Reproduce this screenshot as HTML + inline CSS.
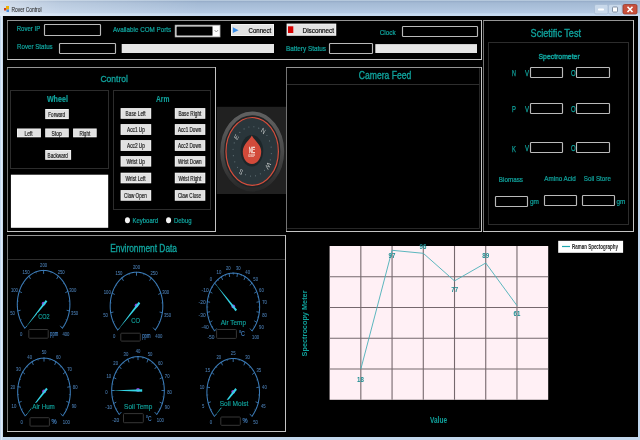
<!DOCTYPE html><html><head><meta charset="utf-8"><style>html,body{margin:0;padding:0;background:#000;overflow:hidden}svg{display:block;filter:blur(0.01px)}text{font-family:"Liberation Sans",sans-serif}</style></head><body>
<svg width="640" height="440" viewBox="0 0 640 440">
<defs><linearGradient id="tb" x1="0" y1="0" x2="0" y2="1"><stop offset="0" stop-color="#c4d6e6"/><stop offset="0.09" stop-color="#98aeca"/><stop offset="0.18" stop-color="#a3b9d4"/><stop offset="0.8" stop-color="#b4c9e2"/><stop offset="0.87" stop-color="#c6daf0"/><stop offset="1" stop-color="#c6daf0"/></linearGradient><linearGradient id="th" x1="0" y1="0" x2="1" y2="0"><stop offset="0" stop-color="#ffffff" stop-opacity="0.5"/><stop offset="0.3" stop-color="#ffffff" stop-opacity="0.25"/><stop offset="1" stop-color="#ffffff" stop-opacity="0"/></linearGradient></defs>
<rect x="0.00" y="0.00" width="640.00" height="440.00" fill="#c2d7ee" stroke="none" stroke-width="1" rx="0" />
<rect x="0.00" y="0.00" width="640.00" height="16.00" fill="url(#tb)" stroke="none" stroke-width="1" rx="0" />
<rect x="0.00" y="0.00" width="200.00" height="16.00" fill="url(#th)" stroke="none" stroke-width="1" rx="0" />
<rect x="1.00" y="16.00" width="1.20" height="424.00" fill="#dfeaf6" stroke="none" stroke-width="1" rx="0" />
<rect x="3.00" y="16.00" width="635.00" height="421.00" fill="#000" stroke="none" stroke-width="1" rx="0" />
<g transform="translate(4,6)"><rect x="0" y="2" width="2.5" height="2.5" fill="#d04020"/><rect x="2" y="0" width="3" height="3.5" fill="#f0b000"/><rect x="2.5" y="3.5" width="2.5" height="2.5" fill="#4a90e0"/></g>
<text x="11.50" y="12.00" font-size="6.98" fill="#2a2a2a" stroke="#2a2a2a" stroke-width="0.08" font-weight="normal" textLength="30.00" lengthAdjust="spacingAndGlyphs" >Rover Control</text>
<rect x="594.50" y="4.50" width="13.50" height="9.50" fill="#c8d8ea" stroke="#a8bcd4" stroke-width="0.8" rx="1.5" />
<rect x="598.00" y="8.50" width="6.00" height="2.00" fill="#fff" stroke="none" stroke-width="1" rx="0.8" />
<rect x="608.50" y="4.50" width="13.50" height="9.50" fill="#c8d8ea" stroke="#a8bcd4" stroke-width="0.8" rx="1.5" />
<rect x="612.50" y="7.00" width="5.00" height="5.00" fill="#fff" stroke="#6a7a90" stroke-width="0.8" rx="0.8" />
<rect x="623.00" y="4.50" width="14.00" height="9.50" fill="#c8503c" stroke="#9a3a2a" stroke-width="0.8" rx="1.5" />
<path d="M627.5,6.8 L632.5,12 M632.5,6.8 L627.5,12" stroke="#fff" stroke-width="1.6"/>
<line x1="7.50" y1="20.00" x2="7.50" y2="60.00" stroke="#747474" stroke-width="1" />
<line x1="7.00" y1="20.50" x2="482.00" y2="20.50" stroke="#959595" stroke-width="1" />
<line x1="7.00" y1="59.50" x2="482.00" y2="59.50" stroke="#c4c4c4" stroke-width="1" />
<line x1="481.50" y1="20.00" x2="481.50" y2="60.00" stroke="#c4c4c4" stroke-width="1" />
<text x="16.70" y="31.20" font-size="6.84" fill="#10a29c" stroke="#10a29c" stroke-width="0.22" font-weight="normal" textLength="23.50" lengthAdjust="spacingAndGlyphs" >Rover IP</text>
<rect x="44.50" y="24.50" width="56.00" height="11.00" fill="#000" stroke="#bababa" stroke-width="1.15" rx="0.8" />
<text x="17.00" y="49.00" font-size="6.56" fill="#10a29c" stroke="#10a29c" stroke-width="0.21" font-weight="normal" textLength="35.70" lengthAdjust="spacingAndGlyphs" >Rover Status</text>
<rect x="59.50" y="43.50" width="56.00" height="10.00" fill="#000" stroke="#bababa" stroke-width="1.15" rx="0.8" />
<text x="113.00" y="32.20" font-size="6.98" fill="#10a29c" stroke="#10a29c" stroke-width="0.22" font-weight="normal" textLength="58.25" lengthAdjust="spacingAndGlyphs" >Available COM Ports</text>
<rect x="175.20" y="25.20" width="44.80" height="11.70" fill="#fff" stroke="#b8b8b8" stroke-width="0.8" rx="0" />
<rect x="176.50" y="26.50" width="36.00" height="9.10" fill="#000" stroke="none" stroke-width="1" rx="0" />
<path d="M214.5,30 L216.3,32 L218.1,30" stroke="#777" stroke-width="0.7" fill="none"/>
<rect x="121.70" y="44.00" width="152.30" height="9.00" fill="#e6e6e6" stroke="none" stroke-width="1" rx="0" />
<rect x="231.00" y="24.00" width="43.00" height="12.00" fill="#f4f4f4" stroke="none" stroke-width="1" rx="0" />
<rect x="232.00" y="25.00" width="41.00" height="10.00" fill="#e2e2e2" stroke="none" stroke-width="1" rx="0" />
<path d="M232.8,27.3 L238.6,30.2 L232.8,33 Z" fill="#3a8ee8"/>
<text x="248.60" y="32.60" font-size="6.42" fill="#101010" stroke="#101010" stroke-width="0.21" font-weight="normal" textLength="22.65" lengthAdjust="spacingAndGlyphs" >Connect</text>
<rect x="286.60" y="23.60" width="49.65" height="12.20" fill="#f4f4f4" stroke="none" stroke-width="1" rx="0" />
<rect x="287.60" y="24.60" width="47.65" height="10.20" fill="#e2e2e2" stroke="none" stroke-width="1" rx="0" />
<rect x="288.00" y="26.30" width="5.30" height="6.70" fill="#d80000" stroke="none" stroke-width="1" rx="0" />
<text x="302.60" y="32.60" font-size="6.98" fill="#101010" stroke="#101010" stroke-width="0.22" font-weight="normal" textLength="31.40" lengthAdjust="spacingAndGlyphs" >Disconnect</text>
<text x="286.00" y="51.20" font-size="6.84" fill="#10a29c" stroke="#10a29c" stroke-width="0.22" font-weight="normal" textLength="40.00" lengthAdjust="spacingAndGlyphs" >Battery Status</text>
<rect x="329.50" y="43.50" width="43.00" height="10.00" fill="#000" stroke="#bababa" stroke-width="1.15" rx="0.8" />
<rect x="375.30" y="44.10" width="101.70" height="8.90" fill="#e6e6e6" stroke="none" stroke-width="1" rx="0" />
<text x="379.75" y="34.70" font-size="7.12" fill="#10a29c" stroke="#10a29c" stroke-width="0.23" font-weight="normal" textLength="15.95" lengthAdjust="spacingAndGlyphs" >Clock</text>
<rect x="402.50" y="26.50" width="75.00" height="10.00" fill="#000" stroke="#bababa" stroke-width="1.15" rx="0.8" />
<line x1="483.50" y1="20.00" x2="483.50" y2="232.00" stroke="#747474" stroke-width="1" />
<line x1="483.00" y1="20.50" x2="634.00" y2="20.50" stroke="#959595" stroke-width="1" />
<line x1="483.00" y1="231.50" x2="634.00" y2="231.50" stroke="#c4c4c4" stroke-width="1" />
<line x1="633.50" y1="20.00" x2="633.50" y2="232.00" stroke="#c4c4c4" stroke-width="1" />
<text x="530.60" y="36.50" font-size="10.47" fill="#10a29c" stroke="#10a29c" stroke-width="0.34" font-weight="normal" textLength="50.40" lengthAdjust="spacingAndGlyphs" >Scietific Test</text>
<rect x="488.50" y="42.50" width="140.00" height="182.00" fill="none" stroke="#2c2c2c" stroke-width="1" rx="0" />
<text x="538.50" y="59.30" font-size="7.68" fill="#10a29c" stroke="#10a29c" stroke-width="0.42" font-weight="normal" textLength="41.20" lengthAdjust="spacingAndGlyphs" >Spectrometer</text>
<text x="512.10" y="75.90" font-size="8.38" fill="#10a29c" stroke="#10a29c" stroke-width="0.25" font-weight="normal" textLength="3.90" lengthAdjust="spacingAndGlyphs" >N</text>
<text x="525.00" y="75.90" font-size="8.38" fill="#10a29c" stroke="#10a29c" stroke-width="0.25" font-weight="normal" textLength="4.05" lengthAdjust="spacingAndGlyphs" >V</text>
<rect x="530.50" y="67.50" width="32.00" height="10.00" fill="#000" stroke="#bababa" stroke-width="1.15" rx="0.8" />
<text x="570.90" y="75.90" font-size="8.38" fill="#10a29c" stroke="#10a29c" stroke-width="0.25" font-weight="normal" textLength="4.70" lengthAdjust="spacingAndGlyphs" >O</text>
<rect x="576.50" y="67.50" width="33.00" height="10.00" fill="#000" stroke="#bababa" stroke-width="1.15" rx="0.8" />
<text x="512.10" y="111.90" font-size="8.38" fill="#10a29c" stroke="#10a29c" stroke-width="0.25" font-weight="normal" textLength="3.90" lengthAdjust="spacingAndGlyphs" >P</text>
<text x="525.00" y="112.00" font-size="8.38" fill="#10a29c" stroke="#10a29c" stroke-width="0.25" font-weight="normal" textLength="4.05" lengthAdjust="spacingAndGlyphs" >V</text>
<rect x="530.50" y="103.50" width="32.00" height="10.00" fill="#000" stroke="#bababa" stroke-width="1.15" rx="0.8" />
<text x="570.90" y="112.00" font-size="8.38" fill="#10a29c" stroke="#10a29c" stroke-width="0.25" font-weight="normal" textLength="4.70" lengthAdjust="spacingAndGlyphs" >O</text>
<rect x="576.50" y="103.50" width="33.00" height="10.00" fill="#000" stroke="#bababa" stroke-width="1.15" rx="0.8" />
<text x="512.10" y="152.00" font-size="8.38" fill="#10a29c" stroke="#10a29c" stroke-width="0.25" font-weight="normal" textLength="3.90" lengthAdjust="spacingAndGlyphs" >K</text>
<text x="525.00" y="151.00" font-size="8.38" fill="#10a29c" stroke="#10a29c" stroke-width="0.25" font-weight="normal" textLength="4.05" lengthAdjust="spacingAndGlyphs" >V</text>
<rect x="530.50" y="142.50" width="32.00" height="10.00" fill="#000" stroke="#bababa" stroke-width="1.15" rx="0.8" />
<text x="570.90" y="151.00" font-size="8.38" fill="#10a29c" stroke="#10a29c" stroke-width="0.25" font-weight="normal" textLength="4.70" lengthAdjust="spacingAndGlyphs" >O</text>
<rect x="576.50" y="142.50" width="33.00" height="10.00" fill="#000" stroke="#bababa" stroke-width="1.15" rx="0.8" />
<text x="498.80" y="182.40" font-size="7.40" fill="#10a29c" stroke="#10a29c" stroke-width="0.24" font-weight="normal" textLength="24.20" lengthAdjust="spacingAndGlyphs" >Biomass</text>
<text x="544.30" y="181.00" font-size="7.12" fill="#10a29c" stroke="#10a29c" stroke-width="0.23" font-weight="normal" textLength="31.50" lengthAdjust="spacingAndGlyphs" >Amino Acid</text>
<text x="583.80" y="181.00" font-size="6.98" fill="#10a29c" stroke="#10a29c" stroke-width="0.22" font-weight="normal" textLength="27.10" lengthAdjust="spacingAndGlyphs" >Soil Store</text>
<rect x="495.50" y="196.50" width="32.00" height="10.00" fill="#000" stroke="#bababa" stroke-width="1.15" rx="0.8" />
<rect x="544.50" y="195.50" width="32.00" height="10.00" fill="#000" stroke="#bababa" stroke-width="1.15" rx="0.8" />
<rect x="582.50" y="195.50" width="32.00" height="10.00" fill="#000" stroke="#bababa" stroke-width="1.15" rx="0.8" />
<text x="530.00" y="204.20" font-size="6.55" fill="#10a29c" stroke="#10a29c" stroke-width="0.21" font-weight="normal" textLength="9.00" lengthAdjust="spacingAndGlyphs" >gm</text>
<text x="616.50" y="203.70" font-size="6.74" fill="#10a29c" stroke="#10a29c" stroke-width="0.22" font-weight="normal" textLength="8.80" lengthAdjust="spacingAndGlyphs" >gm</text>
<line x1="7.50" y1="67.00" x2="7.50" y2="232.00" stroke="#747474" stroke-width="1" />
<line x1="7.00" y1="67.50" x2="216.00" y2="67.50" stroke="#959595" stroke-width="1" />
<line x1="7.00" y1="231.50" x2="216.00" y2="231.50" stroke="#c4c4c4" stroke-width="1" />
<line x1="215.50" y1="67.00" x2="215.50" y2="232.00" stroke="#c4c4c4" stroke-width="1" />
<text x="100.40" y="82.10" font-size="9.92" fill="#10a29c" stroke="#10a29c" stroke-width="0.32" font-weight="normal" textLength="27.50" lengthAdjust="spacingAndGlyphs" >Control</text>
<rect x="10.50" y="90.50" width="98.00" height="78.00" fill="none" stroke="#2c2c2c" stroke-width="1" rx="0" />
<text x="46.90" y="101.60" font-size="8.80" fill="#10a29c" stroke="#10a29c" stroke-width="0.20" font-weight="bold" textLength="21.00" lengthAdjust="spacingAndGlyphs" >Wheel</text>
<rect x="45.20" y="109.00" width="23.60" height="10.10" fill="#f4f4f4" stroke="none" stroke-width="1" rx="0" />
<rect x="46.00" y="109.80" width="22.00" height="8.50" fill="#e1e1e1" stroke="none" stroke-width="1" rx="0" />
<text x="48.30" y="116.90" font-size="6.28" fill="#1c1c1c" stroke="#1c1c1c" stroke-width="0.18" textLength="16.80" lengthAdjust="spacingAndGlyphs">Forward</text>
<rect x="17.00" y="128.50" width="23.90" height="8.80" fill="#f4f4f4" stroke="none" stroke-width="1" rx="0" />
<rect x="17.80" y="129.30" width="22.30" height="7.20" fill="#e1e1e1" stroke="none" stroke-width="1" rx="0" />
<text x="24.50" y="135.75" font-size="6.28" fill="#1c1c1c" stroke="#1c1c1c" stroke-width="0.18" textLength="8.00" lengthAdjust="spacingAndGlyphs">Left</text>
<rect x="45.20" y="128.50" width="23.60" height="8.80" fill="#f4f4f4" stroke="none" stroke-width="1" rx="0" />
<rect x="46.00" y="129.30" width="22.00" height="7.20" fill="#e1e1e1" stroke="none" stroke-width="1" rx="0" />
<text x="51.60" y="135.75" font-size="6.28" fill="#1c1c1c" stroke="#1c1c1c" stroke-width="0.18" textLength="10.10" lengthAdjust="spacingAndGlyphs">Stop</text>
<rect x="73.10" y="128.50" width="23.60" height="8.80" fill="#f4f4f4" stroke="none" stroke-width="1" rx="0" />
<rect x="73.90" y="129.30" width="22.00" height="7.20" fill="#e1e1e1" stroke="none" stroke-width="1" rx="0" />
<text x="79.50" y="135.75" font-size="6.28" fill="#1c1c1c" stroke="#1c1c1c" stroke-width="0.18" textLength="10.80" lengthAdjust="spacingAndGlyphs">Right</text>
<rect x="45.20" y="150.00" width="25.90" height="9.80" fill="#f4f4f4" stroke="none" stroke-width="1" rx="0" />
<rect x="46.00" y="150.80" width="24.30" height="8.20" fill="#e1e1e1" stroke="none" stroke-width="1" rx="0" />
<text x="47.60" y="157.75" font-size="6.28" fill="#1c1c1c" stroke="#1c1c1c" stroke-width="0.18" textLength="20.20" lengthAdjust="spacingAndGlyphs">Backward</text>
<rect x="10.90" y="174.70" width="97.30" height="53.10" fill="#fff" stroke="none" stroke-width="1" rx="0" />
<rect x="113.50" y="90.50" width="97.00" height="119.00" fill="none" stroke="#2c2c2c" stroke-width="1" rx="0" />
<text x="156.00" y="102.20" font-size="8.66" fill="#10a29c" stroke="#10a29c" stroke-width="0.10" font-weight="bold" textLength="13.40" lengthAdjust="spacingAndGlyphs" >Arm</text>
<rect x="120.60" y="108.10" width="30.60" height="10.70" fill="#f4f4f4" stroke="none" stroke-width="1" rx="0" />
<rect x="121.40" y="108.90" width="29.00" height="9.10" fill="#e1e1e1" stroke="none" stroke-width="1" rx="0" />
<text x="125.60" y="116.30" font-size="6.28" fill="#1c1c1c" stroke="#1c1c1c" stroke-width="0.18" textLength="20.10" lengthAdjust="spacingAndGlyphs">Base Left</text>
<rect x="174.80" y="108.10" width="30.50" height="10.70" fill="#f4f4f4" stroke="none" stroke-width="1" rx="0" />
<rect x="175.60" y="108.90" width="28.90" height="9.10" fill="#e1e1e1" stroke="none" stroke-width="1" rx="0" />
<text x="178.40" y="116.30" font-size="6.28" fill="#1c1c1c" stroke="#1c1c1c" stroke-width="0.18" textLength="22.90" lengthAdjust="spacingAndGlyphs">Base Right</text>
<rect x="120.60" y="124.10" width="30.60" height="10.80" fill="#f4f4f4" stroke="none" stroke-width="1" rx="0" />
<rect x="121.40" y="124.90" width="29.00" height="9.20" fill="#e1e1e1" stroke="none" stroke-width="1" rx="0" />
<text x="127.00" y="132.35" font-size="6.28" fill="#1c1c1c" stroke="#1c1c1c" stroke-width="0.18" textLength="17.90" lengthAdjust="spacingAndGlyphs">Acc1 Up</text>
<rect x="174.80" y="124.10" width="30.50" height="10.80" fill="#f4f4f4" stroke="none" stroke-width="1" rx="0" />
<rect x="175.60" y="124.90" width="28.90" height="9.20" fill="#e1e1e1" stroke="none" stroke-width="1" rx="0" />
<text x="178.00" y="132.35" font-size="6.28" fill="#1c1c1c" stroke="#1c1c1c" stroke-width="0.18" textLength="23.30" lengthAdjust="spacingAndGlyphs">Acc1 Down</text>
<rect x="120.60" y="140.10" width="30.60" height="10.80" fill="#f4f4f4" stroke="none" stroke-width="1" rx="0" />
<rect x="121.40" y="140.90" width="29.00" height="9.20" fill="#e1e1e1" stroke="none" stroke-width="1" rx="0" />
<text x="127.00" y="148.35" font-size="6.28" fill="#1c1c1c" stroke="#1c1c1c" stroke-width="0.18" textLength="17.90" lengthAdjust="spacingAndGlyphs">Acc2 Up</text>
<rect x="174.80" y="140.10" width="30.50" height="10.80" fill="#f4f4f4" stroke="none" stroke-width="1" rx="0" />
<rect x="175.60" y="140.90" width="28.90" height="9.20" fill="#e1e1e1" stroke="none" stroke-width="1" rx="0" />
<text x="178.00" y="148.35" font-size="6.28" fill="#1c1c1c" stroke="#1c1c1c" stroke-width="0.18" textLength="23.30" lengthAdjust="spacingAndGlyphs">Acc2 Down</text>
<rect x="120.60" y="156.10" width="30.60" height="10.50" fill="#f4f4f4" stroke="none" stroke-width="1" rx="0" />
<rect x="121.40" y="156.90" width="29.00" height="8.90" fill="#e1e1e1" stroke="none" stroke-width="1" rx="0" />
<text x="126.40" y="164.20" font-size="6.28" fill="#1c1c1c" stroke="#1c1c1c" stroke-width="0.18" textLength="18.50" lengthAdjust="spacingAndGlyphs">Wrist Up</text>
<rect x="174.80" y="156.10" width="30.50" height="10.50" fill="#f4f4f4" stroke="none" stroke-width="1" rx="0" />
<rect x="175.60" y="156.90" width="28.90" height="8.90" fill="#e1e1e1" stroke="none" stroke-width="1" rx="0" />
<text x="178.00" y="164.20" font-size="6.28" fill="#1c1c1c" stroke="#1c1c1c" stroke-width="0.18" textLength="23.70" lengthAdjust="spacingAndGlyphs">Wrist Down</text>
<rect x="120.60" y="172.70" width="30.60" height="10.60" fill="#f4f4f4" stroke="none" stroke-width="1" rx="0" />
<rect x="121.40" y="173.50" width="29.00" height="9.00" fill="#e1e1e1" stroke="none" stroke-width="1" rx="0" />
<text x="125.60" y="180.85" font-size="6.28" fill="#1c1c1c" stroke="#1c1c1c" stroke-width="0.18" textLength="20.10" lengthAdjust="spacingAndGlyphs">Wrist Left</text>
<rect x="174.80" y="172.70" width="30.50" height="10.60" fill="#f4f4f4" stroke="none" stroke-width="1" rx="0" />
<rect x="175.60" y="173.50" width="28.90" height="9.00" fill="#e1e1e1" stroke="none" stroke-width="1" rx="0" />
<text x="178.40" y="180.85" font-size="6.28" fill="#1c1c1c" stroke="#1c1c1c" stroke-width="0.18" textLength="22.90" lengthAdjust="spacingAndGlyphs">Wrist Right</text>
<rect x="120.60" y="190.10" width="30.60" height="10.65" fill="#f4f4f4" stroke="none" stroke-width="1" rx="0" />
<rect x="121.40" y="190.90" width="29.00" height="9.05" fill="#e1e1e1" stroke="none" stroke-width="1" rx="0" />
<text x="124.10" y="198.28" font-size="6.28" fill="#1c1c1c" stroke="#1c1c1c" stroke-width="0.18" textLength="22.70" lengthAdjust="spacingAndGlyphs">Claw Open</text>
<rect x="174.80" y="190.10" width="30.50" height="10.65" fill="#f4f4f4" stroke="none" stroke-width="1" rx="0" />
<rect x="175.60" y="190.90" width="28.90" height="9.05" fill="#e1e1e1" stroke="none" stroke-width="1" rx="0" />
<text x="178.00" y="198.28" font-size="6.28" fill="#1c1c1c" stroke="#1c1c1c" stroke-width="0.18" textLength="23.00" lengthAdjust="spacingAndGlyphs">Claw Close</text>
<ellipse cx="127.45" cy="220.25" rx="2.5" ry="3.05" fill="#f4f4f4"/>
<text x="132.60" y="222.60" font-size="7.12" fill="#10a29c" stroke="#10a29c" stroke-width="0.23" font-weight="normal" textLength="25.40" lengthAdjust="spacingAndGlyphs" >Keyboard</text>
<ellipse cx="168.55" cy="220.25" rx="2.5" ry="3.05" fill="#f4f4f4"/>
<text x="174.00" y="222.60" font-size="7.12" fill="#10a29c" stroke="#10a29c" stroke-width="0.23" font-weight="normal" textLength="17.50" lengthAdjust="spacingAndGlyphs" >Debug</text>
<rect x="216.80" y="106.80" width="69.20" height="87.20" fill="#212121" stroke="none" stroke-width="1" rx="0" />
<defs><linearGradient id="cg" x1="0" y1="0" x2="0" y2="1"><stop offset="0" stop-color="#606060"/><stop offset="0.5" stop-color="#4a4a4a"/><stop offset="1" stop-color="#282828"/></linearGradient></defs>
<ellipse cx="252.2" cy="151.4" rx="31.9" ry="40.2" fill="#1f2426"/>
<ellipse cx="252.2" cy="151.4" rx="30.1" ry="38.1" fill="none" stroke="url(#cg)" stroke-width="3.8"/>
<ellipse cx="252.2" cy="151.4" rx="26.2" ry="33.9" fill="#2a363b" stroke="#d64e3c" stroke-width="1.2"/>
<ellipse cx="266.91" cy="135.48" rx="0.5" ry="0.6" fill="#6a7a80"/>
<ellipse cx="269.60" cy="140.93" rx="0.5" ry="0.6" fill="#6a7a80"/>
<ellipse cx="271.11" cy="147.10" rx="0.5" ry="0.6" fill="#6a7a80"/>
<ellipse cx="271.33" cy="153.56" rx="0.5" ry="0.6" fill="#6a7a80"/>
<ellipse cx="270.24" cy="159.87" rx="0.5" ry="0.6" fill="#6a7a80"/>
<ellipse cx="264.54" cy="170.37" rx="0.5" ry="0.6" fill="#6a7a80"/>
<ellipse cx="260.31" cy="173.85" rx="0.5" ry="0.6" fill="#6a7a80"/>
<ellipse cx="255.53" cy="175.79" rx="0.5" ry="0.6" fill="#6a7a80"/>
<ellipse cx="250.53" cy="176.07" rx="0.5" ry="0.6" fill="#6a7a80"/>
<ellipse cx="245.63" cy="174.67" rx="0.5" ry="0.6" fill="#6a7a80"/>
<ellipse cx="237.49" cy="167.32" rx="0.5" ry="0.6" fill="#6a7a80"/>
<ellipse cx="234.80" cy="161.87" rx="0.5" ry="0.6" fill="#6a7a80"/>
<ellipse cx="233.29" cy="155.70" rx="0.5" ry="0.6" fill="#6a7a80"/>
<ellipse cx="233.07" cy="149.24" rx="0.5" ry="0.6" fill="#6a7a80"/>
<ellipse cx="234.16" cy="142.93" rx="0.5" ry="0.6" fill="#6a7a80"/>
<ellipse cx="239.86" cy="132.43" rx="0.5" ry="0.6" fill="#6a7a80"/>
<ellipse cx="244.09" cy="128.95" rx="0.5" ry="0.6" fill="#6a7a80"/>
<ellipse cx="248.87" cy="127.01" rx="0.5" ry="0.6" fill="#6a7a80"/>
<ellipse cx="253.87" cy="126.73" rx="0.5" ry="0.6" fill="#6a7a80"/>
<ellipse cx="258.77" cy="128.13" rx="0.5" ry="0.6" fill="#6a7a80"/>
<ellipse cx="251.9" cy="150.8" rx="11.3" ry="15.8" fill="#1d2629"/>
<path d="M251.8,135.5 C254,140 261.2,144.5 261.2,151.5 C261.2,158.8 257,164 251.9,164 C246.8,164 242.8,158.8 242.8,151.5 C242.8,144.5 249.6,140 251.8,135.5 Z" fill="#d24a3a"/>
<g transform="translate(263.33,130.90) scale(1,1.29) rotate(35)"><text x="0" y="2.0" font-size="5.6" fill="#c0c4c4" text-anchor="middle">N</text></g>
<g transform="translate(236.31,137.05) scale(1,1.29) rotate(-55)"><text x="0" y="2.0" font-size="5.6" fill="#c0c4c4" text-anchor="middle">E</text></g>
<g transform="translate(241.07,171.90) scale(1,1.29) rotate(215)"><text x="0" y="2.0" font-size="5.6" fill="#c0c4c4" text-anchor="middle">S</text></g>
<g transform="translate(268.09,165.75) scale(1,1.29) rotate(125)"><text x="0" y="2.0" font-size="5.6" fill="#c0c4c4" text-anchor="middle">W</text></g>
<text x="248.7" y="153" font-size="8.3" fill="#f6e0d8" stroke="#f6e0d8" stroke-width="0.35" textLength="6.4" lengthAdjust="spacingAndGlyphs">NE</text>
<text x="248.6" y="157.3" font-size="3.8" fill="#f2d0c6" stroke="#f2d0c6" stroke-width="0.15" textLength="6.4" lengthAdjust="spacingAndGlyphs">030°</text>
<line x1="286.50" y1="67.00" x2="286.50" y2="232.00" stroke="#747474" stroke-width="1" />
<line x1="286.00" y1="67.50" x2="482.00" y2="67.50" stroke="#959595" stroke-width="1" />
<line x1="286.00" y1="231.50" x2="482.00" y2="231.50" stroke="#c4c4c4" stroke-width="1" />
<line x1="481.50" y1="67.00" x2="481.50" y2="232.00" stroke="#c4c4c4" stroke-width="1" />
<path d="M287.00,228.50 L479.50,228.50 L479.50,68.00" fill="none" stroke="#262626" stroke-width="1"/>
<line x1="287.00" y1="84.50" x2="479.50" y2="84.50" stroke="#2e2e2e" stroke-width="1" />
<text x="358.75" y="79.00" font-size="10.47" fill="#10a29c" stroke="#10a29c" stroke-width="0.34" font-weight="normal" textLength="52.50" lengthAdjust="spacingAndGlyphs" >Camera Feed</text>
<line x1="7.50" y1="235.00" x2="7.50" y2="432.00" stroke="#747474" stroke-width="1" />
<line x1="7.00" y1="235.50" x2="286.00" y2="235.50" stroke="#959595" stroke-width="1" />
<line x1="7.00" y1="431.50" x2="286.00" y2="431.50" stroke="#c4c4c4" stroke-width="1" />
<line x1="285.50" y1="235.00" x2="285.50" y2="432.00" stroke="#c4c4c4" stroke-width="1" />
<line x1="8.00" y1="259.50" x2="285.00" y2="259.50" stroke="#2e2e2e" stroke-width="1" />
<text x="110.20" y="251.90" font-size="10.47" fill="#10a29c" stroke="#10a29c" stroke-width="0.34" font-weight="normal" textLength="66.80" lengthAdjust="spacingAndGlyphs" >Environment Data</text>
<path d="M25.00,328.27 L24.68,327.85 L24.37,327.42 L24.06,326.98 L23.75,326.54 L23.45,326.09 L23.16,325.63 L22.88,325.17 L22.60,324.70 L22.32,324.23 L22.06,323.74 L21.80,323.26 L21.54,322.76 L21.30,322.26 L21.06,321.76 L20.82,321.25 L20.60,320.74 L20.38,320.22 L20.17,319.69 L19.96,319.16 L19.76,318.63 L19.57,318.09 L19.39,317.55 L19.22,317.00 L19.05,316.45 L18.89,315.89 L18.73,315.34 L18.59,314.78 L18.45,314.21 L18.32,313.64 L18.20,313.07 L18.08,312.50 L17.97,311.93 L17.87,311.35 L17.78,310.77 L17.70,310.19 L17.62,309.60 L17.56,309.02 L17.50,308.43 L17.44,307.84 L17.40,307.25 L17.36,306.66 L17.34,306.07 L17.32,305.48 L17.30,304.89 L17.30,304.30 L17.30,303.71 L17.32,303.12 L17.34,302.53 L17.36,301.94 L17.40,301.35 L17.44,300.76 L17.50,300.17 L17.56,299.58 L17.62,299.00 L17.70,298.41 L17.78,297.83 L17.87,297.25 L17.97,296.67 L18.08,296.10 L18.20,295.53 L18.32,294.96 L18.45,294.39 L18.59,293.82 L18.73,293.26 L18.89,292.71 L19.05,292.15 L19.22,291.60 L19.39,291.05 L19.57,290.51 L19.76,289.97 L19.96,289.44 L20.17,288.91 L20.38,288.38 L20.60,287.86 L20.82,287.35 L21.06,286.84 L21.30,286.34 L21.54,285.84 L21.80,285.34 L22.06,284.86 L22.32,284.37 L22.60,283.90 L22.88,283.43 L23.16,282.97 L23.45,282.51 L23.75,282.06 L24.06,281.62 L24.37,281.18 L24.68,280.75 L25.00,280.33 L25.33,279.91 L25.66,279.51 L26.00,279.11 L26.35,278.72 L26.69,278.33 L27.05,277.95 L27.41,277.59 L27.77,277.23 L28.14,276.87 L28.51,276.53 L28.89,276.20 L29.28,275.87 L29.66,275.55 L30.05,275.24 L30.45,274.94 L30.85,274.65 L31.25,274.37 L31.66,274.09 L32.07,273.83 L32.49,273.58 L32.90,273.33 L33.32,273.09 L33.75,272.87 L34.17,272.65 L34.60,272.44 L35.04,272.25 L35.47,272.06 L35.91,271.88 L36.35,271.71 L36.79,271.56 L37.24,271.41 L37.68,271.27 L38.13,271.14 L38.58,271.02 L39.03,270.92 L39.49,270.82 L39.94,270.73 L40.39,270.65 L40.85,270.59 L41.31,270.53 L41.77,270.48 L42.22,270.45 L42.68,270.42 L43.14,270.41 L43.60,270.40 L44.06,270.41 L44.52,270.42 L44.98,270.45 L45.43,270.48 L45.89,270.53 L46.35,270.59 L46.81,270.65 L47.26,270.73 L47.71,270.82 L48.17,270.92 L48.62,271.02 L49.07,271.14 L49.52,271.27 L49.96,271.41 L50.41,271.56 L50.85,271.71 L51.29,271.88 L51.73,272.06 L52.16,272.25 L52.60,272.44 L53.03,272.65 L53.45,272.87 L53.88,273.09 L54.30,273.33 L54.71,273.58 L55.13,273.83 L55.54,274.09 L55.95,274.37 L56.35,274.65 L56.75,274.94 L57.15,275.24 L57.54,275.55 L57.92,275.87 L58.31,276.20 L58.69,276.53 L59.06,276.87 L59.43,277.23 L59.79,277.59 L60.15,277.95 L60.51,278.33 L60.85,278.72 L61.20,279.11 L61.54,279.51 L61.87,279.91 L62.20,280.33 L62.52,280.75 L62.83,281.18 L63.14,281.62 L63.45,282.06 L63.75,282.51 L64.04,282.97 L64.32,283.43 L64.60,283.90 L64.88,284.37 L65.14,284.86 L65.40,285.34 L65.66,285.84 L65.90,286.34 L66.14,286.84 L66.38,287.35 L66.60,287.86 L66.82,288.38 L67.03,288.91 L67.24,289.44 L67.44,289.97 L67.63,290.51 L67.81,291.05 L67.98,291.60 L68.15,292.15 L68.31,292.71 L68.47,293.26 L68.61,293.82 L68.75,294.39 L68.88,294.96 L69.00,295.53 L69.12,296.10 L69.23,296.67 L69.33,297.25 L69.42,297.83 L69.50,298.41 L69.58,299.00 L69.64,299.58 L69.70,300.17 L69.76,300.76 L69.80,301.35 L69.84,301.94 L69.86,302.53 L69.88,303.12 L69.90,303.71 L69.90,304.30 L69.90,304.89 L69.88,305.48 L69.86,306.07 L69.84,306.66 L69.80,307.25 L69.76,307.84 L69.70,308.43 L69.64,309.02 L69.58,309.60 L69.50,310.19 L69.42,310.77 L69.33,311.35 L69.23,311.93 L69.12,312.50 L69.00,313.07 L68.88,313.64 L68.75,314.21 L68.61,314.78 L68.47,315.34 L68.31,315.89 L68.15,316.45 L67.98,317.00 L67.81,317.55 L67.63,318.09 L67.44,318.63 L67.24,319.16 L67.03,319.69 L66.82,320.22 L66.60,320.74 L66.38,321.25 L66.14,321.76 L65.90,322.26 L65.66,322.76 L65.40,323.26 L65.14,323.74 L64.88,324.23 L64.60,324.70 L64.32,325.17 L64.04,325.63 L63.75,326.09 L63.45,326.54 L63.14,326.98 L62.83,327.42 L62.52,327.85 L62.20,328.27" fill="none" stroke="#3c7cb8" stroke-width="1.05"/>
<line x1="24.72" y1="328.55" x2="26.98" y2="325.80" stroke="#3c7cb8" stroke-width="0.85"/>
<line x1="20.05" y1="320.47" x2="21.55" y2="319.51" stroke="#3c7cb8" stroke-width="0.55"/>
<line x1="17.41" y1="310.99" x2="20.55" y2="310.23" stroke="#3c7cb8" stroke-width="0.85"/>
<line x1="17.03" y1="300.94" x2="18.72" y2="301.14" stroke="#3c7cb8" stroke-width="0.55"/>
<line x1="18.93" y1="291.17" x2="21.89" y2="292.67" stroke="#3c7cb8" stroke-width="0.85"/>
<line x1="22.96" y1="282.54" x2="24.27" y2="283.82" stroke="#3c7cb8" stroke-width="0.55"/>
<line x1="28.77" y1="275.78" x2="30.54" y2="279.02" stroke="#3c7cb8" stroke-width="0.85"/>
<line x1="35.85" y1="271.48" x2="36.34" y2="273.41" stroke="#3c7cb8" stroke-width="0.55"/>
<line x1="43.60" y1="270.00" x2="43.60" y2="273.90" stroke="#3c7cb8" stroke-width="0.85"/>
<line x1="51.35" y1="271.48" x2="50.86" y2="273.41" stroke="#3c7cb8" stroke-width="0.55"/>
<line x1="58.43" y1="275.78" x2="56.66" y2="279.02" stroke="#3c7cb8" stroke-width="0.85"/>
<line x1="64.24" y1="282.54" x2="62.93" y2="283.82" stroke="#3c7cb8" stroke-width="0.55"/>
<line x1="68.27" y1="291.17" x2="65.31" y2="292.67" stroke="#3c7cb8" stroke-width="0.85"/>
<line x1="70.17" y1="300.94" x2="68.48" y2="301.14" stroke="#3c7cb8" stroke-width="0.55"/>
<line x1="69.79" y1="310.99" x2="66.65" y2="310.23" stroke="#3c7cb8" stroke-width="0.85"/>
<line x1="67.15" y1="320.47" x2="65.65" y2="319.51" stroke="#3c7cb8" stroke-width="0.55"/>
<line x1="62.48" y1="328.55" x2="60.22" y2="325.80" stroke="#3c7cb8" stroke-width="0.85"/>
<text x="20.08" y="336.23" font-size="6.0" fill="#4676a8" stroke="#4676a8" stroke-width="0.12" textLength="2.35" lengthAdjust="spacingAndGlyphs">0</text>
<text x="10.26" y="315.39" font-size="6.0" fill="#4676a8" stroke="#4676a8" stroke-width="0.12" textLength="4.70" lengthAdjust="spacingAndGlyphs">50</text>
<text x="10.88" y="291.87" font-size="6.0" fill="#4676a8" stroke="#4676a8" stroke-width="0.12" textLength="7.05" lengthAdjust="spacingAndGlyphs">100</text>
<text x="22.52" y="273.61" font-size="6.0" fill="#4676a8" stroke="#4676a8" stroke-width="0.12" textLength="7.05" lengthAdjust="spacingAndGlyphs">150</text>
<text x="40.08" y="266.75" font-size="6.0" fill="#4676a8" stroke="#4676a8" stroke-width="0.12" textLength="7.05" lengthAdjust="spacingAndGlyphs">200</text>
<text x="57.63" y="273.61" font-size="6.0" fill="#4676a8" stroke="#4676a8" stroke-width="0.12" textLength="7.05" lengthAdjust="spacingAndGlyphs">250</text>
<text x="69.27" y="291.87" font-size="6.0" fill="#4676a8" stroke="#4676a8" stroke-width="0.12" textLength="7.05" lengthAdjust="spacingAndGlyphs">300</text>
<text x="71.07" y="315.39" font-size="6.0" fill="#4676a8" stroke="#4676a8" stroke-width="0.12" textLength="7.05" lengthAdjust="spacingAndGlyphs">350</text>
<text x="62.42" y="336.23" font-size="6.0" fill="#4676a8" stroke="#4676a8" stroke-width="0.12" textLength="7.05" lengthAdjust="spacingAndGlyphs">400</text>
<circle cx="43.60" cy="303.70" r="1.9" fill="#8a3ad8"/>
<path d="M25.00,328.27 L45.76,299.95 L47.38,301.58 Z" fill="#34d4e4"/>
<rect x="37.20" y="312.90" width="13.30" height="8.00" fill="#000" stroke="none" stroke-width="1" rx="0" />
<text x="38.20" y="319.40" font-size="6.98" fill="#10a29c" stroke="#10a29c" stroke-width="0.15" font-weight="normal" textLength="11.30" lengthAdjust="spacingAndGlyphs" >CO2</text>
<rect x="28.80" y="329.50" width="19.40" height="8.70" fill="#000" stroke="#363636" stroke-width="1" rx="0.8" />
<text x="50.10" y="335.60" font-size="6.74" fill="#4786c8" stroke="#4786c8" stroke-width="0.15" font-weight="normal" textLength="8.20" lengthAdjust="spacingAndGlyphs" >ppm</text>
<path d="M117.90,330.07 L117.58,329.65 L117.27,329.22 L116.96,328.78 L116.65,328.34 L116.35,327.89 L116.06,327.43 L115.78,326.97 L115.50,326.50 L115.22,326.03 L114.96,325.54 L114.70,325.06 L114.44,324.56 L114.20,324.06 L113.96,323.56 L113.72,323.05 L113.50,322.54 L113.28,322.02 L113.07,321.49 L112.86,320.96 L112.66,320.43 L112.47,319.89 L112.29,319.35 L112.12,318.80 L111.95,318.25 L111.79,317.69 L111.63,317.14 L111.49,316.58 L111.35,316.01 L111.22,315.44 L111.10,314.87 L110.98,314.30 L110.87,313.73 L110.77,313.15 L110.68,312.57 L110.60,311.99 L110.52,311.40 L110.46,310.82 L110.40,310.23 L110.34,309.64 L110.30,309.05 L110.26,308.46 L110.24,307.87 L110.22,307.28 L110.20,306.69 L110.20,306.10 L110.20,305.51 L110.22,304.92 L110.24,304.33 L110.26,303.74 L110.30,303.15 L110.34,302.56 L110.40,301.97 L110.46,301.38 L110.52,300.80 L110.60,300.21 L110.68,299.63 L110.77,299.05 L110.87,298.47 L110.98,297.90 L111.10,297.33 L111.22,296.76 L111.35,296.19 L111.49,295.62 L111.63,295.06 L111.79,294.51 L111.95,293.95 L112.12,293.40 L112.29,292.85 L112.47,292.31 L112.66,291.77 L112.86,291.24 L113.07,290.71 L113.28,290.18 L113.50,289.66 L113.72,289.15 L113.96,288.64 L114.20,288.14 L114.44,287.64 L114.70,287.14 L114.96,286.66 L115.22,286.17 L115.50,285.70 L115.78,285.23 L116.06,284.77 L116.35,284.31 L116.65,283.86 L116.96,283.42 L117.27,282.98 L117.58,282.55 L117.90,282.13 L118.23,281.71 L118.56,281.31 L118.90,280.91 L119.25,280.52 L119.59,280.13 L119.95,279.75 L120.31,279.39 L120.67,279.03 L121.04,278.67 L121.41,278.33 L121.79,278.00 L122.18,277.67 L122.56,277.35 L122.95,277.04 L123.35,276.74 L123.75,276.45 L124.15,276.17 L124.56,275.89 L124.97,275.63 L125.39,275.38 L125.80,275.13 L126.22,274.89 L126.65,274.67 L127.07,274.45 L127.50,274.24 L127.94,274.05 L128.37,273.86 L128.81,273.68 L129.25,273.51 L129.69,273.36 L130.14,273.21 L130.58,273.07 L131.03,272.94 L131.48,272.82 L131.93,272.72 L132.39,272.62 L132.84,272.53 L133.29,272.45 L133.75,272.39 L134.21,272.33 L134.67,272.28 L135.12,272.25 L135.58,272.22 L136.04,272.21 L136.50,272.20 L136.96,272.21 L137.42,272.22 L137.88,272.25 L138.33,272.28 L138.79,272.33 L139.25,272.39 L139.71,272.45 L140.16,272.53 L140.61,272.62 L141.07,272.72 L141.52,272.82 L141.97,272.94 L142.42,273.07 L142.86,273.21 L143.31,273.36 L143.75,273.51 L144.19,273.68 L144.63,273.86 L145.06,274.05 L145.50,274.24 L145.93,274.45 L146.35,274.67 L146.78,274.89 L147.20,275.13 L147.61,275.38 L148.03,275.63 L148.44,275.89 L148.85,276.17 L149.25,276.45 L149.65,276.74 L150.05,277.04 L150.44,277.35 L150.82,277.67 L151.21,278.00 L151.59,278.33 L151.96,278.67 L152.33,279.03 L152.69,279.39 L153.05,279.75 L153.41,280.13 L153.75,280.52 L154.10,280.91 L154.44,281.31 L154.77,281.71 L155.10,282.13 L155.42,282.55 L155.73,282.98 L156.04,283.42 L156.35,283.86 L156.65,284.31 L156.94,284.77 L157.22,285.23 L157.50,285.70 L157.78,286.17 L158.04,286.66 L158.30,287.14 L158.56,287.64 L158.80,288.14 L159.04,288.64 L159.28,289.15 L159.50,289.66 L159.72,290.18 L159.93,290.71 L160.14,291.24 L160.34,291.77 L160.53,292.31 L160.71,292.85 L160.88,293.40 L161.05,293.95 L161.21,294.51 L161.37,295.06 L161.51,295.62 L161.65,296.19 L161.78,296.76 L161.90,297.33 L162.02,297.90 L162.13,298.47 L162.23,299.05 L162.32,299.63 L162.40,300.21 L162.48,300.80 L162.54,301.38 L162.60,301.97 L162.66,302.56 L162.70,303.15 L162.74,303.74 L162.76,304.33 L162.78,304.92 L162.80,305.51 L162.80,306.10 L162.80,306.69 L162.78,307.28 L162.76,307.87 L162.74,308.46 L162.70,309.05 L162.66,309.64 L162.60,310.23 L162.54,310.82 L162.48,311.40 L162.40,311.99 L162.32,312.57 L162.23,313.15 L162.13,313.73 L162.02,314.30 L161.90,314.87 L161.78,315.44 L161.65,316.01 L161.51,316.58 L161.37,317.14 L161.21,317.69 L161.05,318.25 L160.88,318.80 L160.71,319.35 L160.53,319.89 L160.34,320.43 L160.14,320.96 L159.93,321.49 L159.72,322.02 L159.50,322.54 L159.28,323.05 L159.04,323.56 L158.80,324.06 L158.56,324.56 L158.30,325.06 L158.04,325.54 L157.78,326.03 L157.50,326.50 L157.22,326.97 L156.94,327.43 L156.65,327.89 L156.35,328.34 L156.04,328.78 L155.73,329.22 L155.42,329.65 L155.10,330.07" fill="none" stroke="#3c7cb8" stroke-width="1.05"/>
<line x1="117.62" y1="330.35" x2="119.88" y2="327.60" stroke="#3c7cb8" stroke-width="0.85"/>
<line x1="112.95" y1="322.27" x2="114.45" y2="321.31" stroke="#3c7cb8" stroke-width="0.55"/>
<line x1="110.31" y1="312.79" x2="113.45" y2="312.03" stroke="#3c7cb8" stroke-width="0.85"/>
<line x1="109.93" y1="302.74" x2="111.62" y2="302.94" stroke="#3c7cb8" stroke-width="0.55"/>
<line x1="111.83" y1="292.97" x2="114.79" y2="294.47" stroke="#3c7cb8" stroke-width="0.85"/>
<line x1="115.86" y1="284.34" x2="117.17" y2="285.62" stroke="#3c7cb8" stroke-width="0.55"/>
<line x1="121.67" y1="277.58" x2="123.44" y2="280.82" stroke="#3c7cb8" stroke-width="0.85"/>
<line x1="128.75" y1="273.28" x2="129.24" y2="275.21" stroke="#3c7cb8" stroke-width="0.55"/>
<line x1="136.50" y1="271.80" x2="136.50" y2="275.70" stroke="#3c7cb8" stroke-width="0.85"/>
<line x1="144.25" y1="273.28" x2="143.76" y2="275.21" stroke="#3c7cb8" stroke-width="0.55"/>
<line x1="151.33" y1="277.58" x2="149.56" y2="280.82" stroke="#3c7cb8" stroke-width="0.85"/>
<line x1="157.14" y1="284.34" x2="155.83" y2="285.62" stroke="#3c7cb8" stroke-width="0.55"/>
<line x1="161.17" y1="292.97" x2="158.21" y2="294.47" stroke="#3c7cb8" stroke-width="0.85"/>
<line x1="163.07" y1="302.74" x2="161.38" y2="302.94" stroke="#3c7cb8" stroke-width="0.55"/>
<line x1="162.69" y1="312.79" x2="159.55" y2="312.03" stroke="#3c7cb8" stroke-width="0.85"/>
<line x1="160.05" y1="322.27" x2="158.55" y2="321.31" stroke="#3c7cb8" stroke-width="0.55"/>
<line x1="155.38" y1="330.35" x2="153.12" y2="327.60" stroke="#3c7cb8" stroke-width="0.85"/>
<text x="112.98" y="338.03" font-size="6.0" fill="#4676a8" stroke="#4676a8" stroke-width="0.12" textLength="2.35" lengthAdjust="spacingAndGlyphs">0</text>
<text x="103.16" y="317.19" font-size="6.0" fill="#4676a8" stroke="#4676a8" stroke-width="0.12" textLength="4.70" lengthAdjust="spacingAndGlyphs">50</text>
<text x="103.78" y="293.67" font-size="6.0" fill="#4676a8" stroke="#4676a8" stroke-width="0.12" textLength="7.05" lengthAdjust="spacingAndGlyphs">100</text>
<text x="115.42" y="275.41" font-size="6.0" fill="#4676a8" stroke="#4676a8" stroke-width="0.12" textLength="7.05" lengthAdjust="spacingAndGlyphs">150</text>
<text x="132.97" y="268.55" font-size="6.0" fill="#4676a8" stroke="#4676a8" stroke-width="0.12" textLength="7.05" lengthAdjust="spacingAndGlyphs">200</text>
<text x="150.53" y="275.41" font-size="6.0" fill="#4676a8" stroke="#4676a8" stroke-width="0.12" textLength="7.05" lengthAdjust="spacingAndGlyphs">250</text>
<text x="162.17" y="293.67" font-size="6.0" fill="#4676a8" stroke="#4676a8" stroke-width="0.12" textLength="7.05" lengthAdjust="spacingAndGlyphs">300</text>
<text x="163.97" y="317.19" font-size="6.0" fill="#4676a8" stroke="#4676a8" stroke-width="0.12" textLength="7.05" lengthAdjust="spacingAndGlyphs">350</text>
<text x="155.32" y="338.03" font-size="6.0" fill="#4676a8" stroke="#4676a8" stroke-width="0.12" textLength="7.05" lengthAdjust="spacingAndGlyphs">400</text>
<circle cx="136.50" cy="305.50" r="1.9" fill="#8a3ad8"/>
<path d="M117.90,330.07 L138.66,301.75 L140.28,303.38 Z" fill="#34d4e4"/>
<rect x="130.20" y="316.80" width="10.80" height="7.50" fill="#000" stroke="none" stroke-width="1" rx="0" />
<text x="131.20" y="322.80" font-size="6.28" fill="#10a29c" stroke="#10a29c" stroke-width="0.15" font-weight="normal" textLength="8.80" lengthAdjust="spacingAndGlyphs" >CO</text>
<rect x="120.80" y="333.20" width="19.50" height="7.90" fill="#000" stroke="#363636" stroke-width="1" rx="0.8" />
<text x="142.20" y="338.30" font-size="6.74" fill="#4786c8" stroke="#4786c8" stroke-width="0.15" font-weight="normal" textLength="8.20" lengthAdjust="spacingAndGlyphs" >ppm</text>
<path d="M214.70,330.97 L214.38,330.55 L214.07,330.12 L213.76,329.68 L213.45,329.24 L213.15,328.79 L212.86,328.33 L212.58,327.87 L212.30,327.40 L212.02,326.93 L211.76,326.44 L211.50,325.96 L211.24,325.46 L211.00,324.96 L210.76,324.46 L210.52,323.95 L210.30,323.44 L210.08,322.92 L209.87,322.39 L209.66,321.86 L209.46,321.33 L209.27,320.79 L209.09,320.25 L208.92,319.70 L208.75,319.15 L208.59,318.59 L208.43,318.04 L208.29,317.48 L208.15,316.91 L208.02,316.34 L207.90,315.77 L207.78,315.20 L207.67,314.63 L207.57,314.05 L207.48,313.47 L207.40,312.89 L207.32,312.30 L207.26,311.72 L207.20,311.13 L207.14,310.54 L207.10,309.95 L207.06,309.36 L207.04,308.77 L207.02,308.18 L207.00,307.59 L207.00,307.00 L207.00,306.41 L207.02,305.82 L207.04,305.23 L207.06,304.64 L207.10,304.05 L207.14,303.46 L207.20,302.87 L207.26,302.28 L207.32,301.70 L207.40,301.11 L207.48,300.53 L207.57,299.95 L207.67,299.37 L207.78,298.80 L207.90,298.23 L208.02,297.66 L208.15,297.09 L208.29,296.52 L208.43,295.96 L208.59,295.41 L208.75,294.85 L208.92,294.30 L209.09,293.75 L209.27,293.21 L209.46,292.67 L209.66,292.14 L209.87,291.61 L210.08,291.08 L210.30,290.56 L210.52,290.05 L210.76,289.54 L211.00,289.04 L211.24,288.54 L211.50,288.04 L211.76,287.56 L212.02,287.07 L212.30,286.60 L212.58,286.13 L212.86,285.67 L213.15,285.21 L213.45,284.76 L213.76,284.32 L214.07,283.88 L214.38,283.45 L214.70,283.03 L215.03,282.61 L215.36,282.21 L215.70,281.81 L216.05,281.42 L216.39,281.03 L216.75,280.65 L217.11,280.29 L217.47,279.93 L217.84,279.57 L218.21,279.23 L218.59,278.90 L218.98,278.57 L219.36,278.25 L219.75,277.94 L220.15,277.64 L220.55,277.35 L220.95,277.07 L221.36,276.79 L221.77,276.53 L222.19,276.28 L222.60,276.03 L223.02,275.79 L223.45,275.57 L223.87,275.35 L224.30,275.14 L224.74,274.95 L225.17,274.76 L225.61,274.58 L226.05,274.41 L226.49,274.26 L226.94,274.11 L227.38,273.97 L227.83,273.84 L228.28,273.72 L228.73,273.62 L229.19,273.52 L229.64,273.43 L230.09,273.35 L230.55,273.29 L231.01,273.23 L231.47,273.18 L231.92,273.15 L232.38,273.12 L232.84,273.11 L233.30,273.10 L233.76,273.11 L234.22,273.12 L234.68,273.15 L235.13,273.18 L235.59,273.23 L236.05,273.29 L236.51,273.35 L236.96,273.43 L237.41,273.52 L237.87,273.62 L238.32,273.72 L238.77,273.84 L239.22,273.97 L239.66,274.11 L240.11,274.26 L240.55,274.41 L240.99,274.58 L241.43,274.76 L241.86,274.95 L242.30,275.14 L242.73,275.35 L243.15,275.57 L243.58,275.79 L244.00,276.03 L244.41,276.28 L244.83,276.53 L245.24,276.79 L245.65,277.07 L246.05,277.35 L246.45,277.64 L246.85,277.94 L247.24,278.25 L247.62,278.57 L248.01,278.90 L248.39,279.23 L248.76,279.57 L249.13,279.93 L249.49,280.29 L249.85,280.65 L250.21,281.03 L250.55,281.42 L250.90,281.81 L251.24,282.21 L251.57,282.61 L251.90,283.03 L252.22,283.45 L252.53,283.88 L252.84,284.32 L253.15,284.76 L253.45,285.21 L253.74,285.67 L254.02,286.13 L254.30,286.60 L254.58,287.07 L254.84,287.56 L255.10,288.04 L255.36,288.54 L255.60,289.04 L255.84,289.54 L256.08,290.05 L256.30,290.56 L256.52,291.08 L256.73,291.61 L256.94,292.14 L257.14,292.67 L257.33,293.21 L257.51,293.75 L257.68,294.30 L257.85,294.85 L258.01,295.41 L258.17,295.96 L258.31,296.52 L258.45,297.09 L258.58,297.66 L258.70,298.23 L258.82,298.80 L258.93,299.37 L259.03,299.95 L259.12,300.53 L259.20,301.11 L259.28,301.70 L259.34,302.28 L259.40,302.87 L259.46,303.46 L259.50,304.05 L259.54,304.64 L259.56,305.23 L259.58,305.82 L259.60,306.41 L259.60,307.00 L259.60,307.59 L259.58,308.18 L259.56,308.77 L259.54,309.36 L259.50,309.95 L259.46,310.54 L259.40,311.13 L259.34,311.72 L259.28,312.30 L259.20,312.89 L259.12,313.47 L259.03,314.05 L258.93,314.63 L258.82,315.20 L258.70,315.77 L258.58,316.34 L258.45,316.91 L258.31,317.48 L258.17,318.04 L258.01,318.59 L257.85,319.15 L257.68,319.70 L257.51,320.25 L257.33,320.79 L257.14,321.33 L256.94,321.86 L256.73,322.39 L256.52,322.92 L256.30,323.44 L256.08,323.95 L255.84,324.46 L255.60,324.96 L255.36,325.46 L255.10,325.96 L254.84,326.44 L254.58,326.93 L254.30,327.40 L254.02,327.87 L253.74,328.33 L253.45,328.79 L253.15,329.24 L252.84,329.68 L252.53,330.12 L252.22,330.55 L251.90,330.97" fill="none" stroke="#3c7cb8" stroke-width="1.05"/>
<line x1="214.42" y1="331.25" x2="216.68" y2="328.50" stroke="#3c7cb8" stroke-width="0.85"/>
<line x1="211.70" y1="327.16" x2="213.07" y2="325.97" stroke="#3c7cb8" stroke-width="0.55"/>
<line x1="209.51" y1="322.57" x2="212.36" y2="320.80" stroke="#3c7cb8" stroke-width="0.85"/>
<line x1="207.91" y1="317.60" x2="209.52" y2="316.97" stroke="#3c7cb8" stroke-width="0.55"/>
<line x1="206.93" y1="312.37" x2="210.09" y2="311.76" stroke="#3c7cb8" stroke-width="0.85"/>
<line x1="206.60" y1="307.00" x2="208.30" y2="307.00" stroke="#3c7cb8" stroke-width="0.55"/>
<line x1="206.93" y1="301.63" x2="210.09" y2="302.24" stroke="#3c7cb8" stroke-width="0.85"/>
<line x1="207.91" y1="296.40" x2="209.52" y2="297.03" stroke="#3c7cb8" stroke-width="0.55"/>
<line x1="209.51" y1="291.43" x2="212.36" y2="293.20" stroke="#3c7cb8" stroke-width="0.85"/>
<line x1="211.70" y1="286.84" x2="213.07" y2="288.03" stroke="#3c7cb8" stroke-width="0.55"/>
<line x1="214.42" y1="282.75" x2="216.68" y2="285.50" stroke="#3c7cb8" stroke-width="0.85"/>
<line x1="217.61" y1="279.25" x2="218.61" y2="280.89" stroke="#3c7cb8" stroke-width="0.55"/>
<line x1="221.18" y1="276.44" x2="222.63" y2="279.91" stroke="#3c7cb8" stroke-width="0.85"/>
<line x1="225.05" y1="274.38" x2="225.57" y2="276.30" stroke="#3c7cb8" stroke-width="0.55"/>
<line x1="229.12" y1="273.12" x2="229.62" y2="276.97" stroke="#3c7cb8" stroke-width="0.85"/>
<line x1="233.30" y1="272.70" x2="233.30" y2="274.73" stroke="#3c7cb8" stroke-width="0.55"/>
<line x1="237.48" y1="273.12" x2="236.98" y2="276.97" stroke="#3c7cb8" stroke-width="0.85"/>
<line x1="241.55" y1="274.38" x2="241.03" y2="276.30" stroke="#3c7cb8" stroke-width="0.55"/>
<line x1="245.42" y1="276.44" x2="243.97" y2="279.91" stroke="#3c7cb8" stroke-width="0.85"/>
<line x1="248.99" y1="279.25" x2="247.99" y2="280.89" stroke="#3c7cb8" stroke-width="0.55"/>
<line x1="252.18" y1="282.75" x2="249.92" y2="285.50" stroke="#3c7cb8" stroke-width="0.85"/>
<line x1="254.90" y1="286.84" x2="253.53" y2="288.03" stroke="#3c7cb8" stroke-width="0.55"/>
<line x1="257.09" y1="291.43" x2="254.24" y2="293.20" stroke="#3c7cb8" stroke-width="0.85"/>
<line x1="258.69" y1="296.40" x2="257.08" y2="297.03" stroke="#3c7cb8" stroke-width="0.55"/>
<line x1="259.67" y1="301.63" x2="256.51" y2="302.24" stroke="#3c7cb8" stroke-width="0.85"/>
<line x1="260.00" y1="307.00" x2="258.30" y2="307.00" stroke="#3c7cb8" stroke-width="0.55"/>
<line x1="259.67" y1="312.37" x2="256.51" y2="311.76" stroke="#3c7cb8" stroke-width="0.85"/>
<line x1="258.69" y1="317.60" x2="257.08" y2="316.97" stroke="#3c7cb8" stroke-width="0.55"/>
<line x1="257.09" y1="322.57" x2="254.24" y2="320.80" stroke="#3c7cb8" stroke-width="0.85"/>
<line x1="254.90" y1="327.16" x2="253.53" y2="325.97" stroke="#3c7cb8" stroke-width="0.55"/>
<line x1="252.18" y1="331.25" x2="249.92" y2="328.50" stroke="#3c7cb8" stroke-width="0.85"/>
<text x="207.43" y="338.93" font-size="6.0" fill="#4676a8" stroke="#4676a8" stroke-width="0.12" textLength="7.05" lengthAdjust="spacingAndGlyphs">-50</text>
<text x="201.62" y="328.63" font-size="6.0" fill="#4676a8" stroke="#4676a8" stroke-width="0.12" textLength="7.05" lengthAdjust="spacingAndGlyphs">-40</text>
<text x="198.56" y="316.52" font-size="6.0" fill="#4676a8" stroke="#4676a8" stroke-width="0.12" textLength="7.05" lengthAdjust="spacingAndGlyphs">-30</text>
<text x="198.56" y="303.78" font-size="6.0" fill="#4676a8" stroke="#4676a8" stroke-width="0.12" textLength="7.05" lengthAdjust="spacingAndGlyphs">-20</text>
<text x="201.62" y="291.67" font-size="6.0" fill="#4676a8" stroke="#4676a8" stroke-width="0.12" textLength="7.05" lengthAdjust="spacingAndGlyphs">-10</text>
<text x="209.78" y="281.37" font-size="6.0" fill="#4676a8" stroke="#4676a8" stroke-width="0.12" textLength="2.35" lengthAdjust="spacingAndGlyphs">0</text>
<text x="216.60" y="273.89" font-size="6.0" fill="#4676a8" stroke="#4676a8" stroke-width="0.12" textLength="4.70" lengthAdjust="spacingAndGlyphs">10</text>
<text x="226.01" y="269.95" font-size="6.0" fill="#4676a8" stroke="#4676a8" stroke-width="0.12" textLength="4.70" lengthAdjust="spacingAndGlyphs">20</text>
<text x="235.89" y="269.95" font-size="6.0" fill="#4676a8" stroke="#4676a8" stroke-width="0.12" textLength="4.70" lengthAdjust="spacingAndGlyphs">30</text>
<text x="245.30" y="273.89" font-size="6.0" fill="#4676a8" stroke="#4676a8" stroke-width="0.12" textLength="4.70" lengthAdjust="spacingAndGlyphs">40</text>
<text x="253.29" y="281.37" font-size="6.0" fill="#4676a8" stroke="#4676a8" stroke-width="0.12" textLength="4.70" lengthAdjust="spacingAndGlyphs">50</text>
<text x="259.11" y="291.67" font-size="6.0" fill="#4676a8" stroke="#4676a8" stroke-width="0.12" textLength="4.70" lengthAdjust="spacingAndGlyphs">60</text>
<text x="262.16" y="303.78" font-size="6.0" fill="#4676a8" stroke="#4676a8" stroke-width="0.12" textLength="4.70" lengthAdjust="spacingAndGlyphs">70</text>
<text x="262.16" y="316.52" font-size="6.0" fill="#4676a8" stroke="#4676a8" stroke-width="0.12" textLength="4.70" lengthAdjust="spacingAndGlyphs">80</text>
<text x="259.11" y="328.63" font-size="6.0" fill="#4676a8" stroke="#4676a8" stroke-width="0.12" textLength="4.70" lengthAdjust="spacingAndGlyphs">90</text>
<text x="252.12" y="338.93" font-size="6.0" fill="#4676a8" stroke="#4676a8" stroke-width="0.12" textLength="7.05" lengthAdjust="spacingAndGlyphs">100</text>
<circle cx="233.30" cy="306.40" r="1.9" fill="#8a3ad8"/>
<path d="M214.70,283.03 L237.08,309.72 L235.46,311.35 Z" fill="#34d4e4"/>
<rect x="219.70" y="318.70" width="27.30" height="8.00" fill="#000" stroke="none" stroke-width="1" rx="0" />
<text x="220.70" y="325.20" font-size="6.98" fill="#10a29c" stroke="#10a29c" stroke-width="0.15" font-weight="normal" textLength="25.30" lengthAdjust="spacingAndGlyphs" >Air Temp</text>
<rect x="216.60" y="329.50" width="19.80" height="8.90" fill="#000" stroke="#363636" stroke-width="1" rx="0.8" />
<text x="238.90" y="335.90" font-size="6.98" fill="#4786c8" stroke="#4786c8" stroke-width="0.15" font-weight="normal" textLength="5.90" lengthAdjust="spacingAndGlyphs" >°C</text>
<path d="M25.40,415.97 L25.08,415.55 L24.77,415.12 L24.46,414.68 L24.15,414.24 L23.85,413.79 L23.56,413.33 L23.28,412.87 L23.00,412.40 L22.72,411.93 L22.46,411.44 L22.20,410.96 L21.94,410.46 L21.70,409.96 L21.46,409.46 L21.22,408.95 L21.00,408.44 L20.78,407.92 L20.57,407.39 L20.36,406.86 L20.16,406.33 L19.97,405.79 L19.79,405.25 L19.62,404.70 L19.45,404.15 L19.29,403.59 L19.13,403.04 L18.99,402.48 L18.85,401.91 L18.72,401.34 L18.60,400.77 L18.48,400.20 L18.37,399.63 L18.27,399.05 L18.18,398.47 L18.10,397.89 L18.02,397.30 L17.96,396.72 L17.90,396.13 L17.84,395.54 L17.80,394.95 L17.76,394.36 L17.74,393.77 L17.72,393.18 L17.70,392.59 L17.70,392.00 L17.70,391.41 L17.72,390.82 L17.74,390.23 L17.76,389.64 L17.80,389.05 L17.84,388.46 L17.90,387.87 L17.96,387.28 L18.02,386.70 L18.10,386.11 L18.18,385.53 L18.27,384.95 L18.37,384.37 L18.48,383.80 L18.60,383.23 L18.72,382.66 L18.85,382.09 L18.99,381.52 L19.13,380.96 L19.29,380.41 L19.45,379.85 L19.62,379.30 L19.79,378.75 L19.97,378.21 L20.16,377.67 L20.36,377.14 L20.57,376.61 L20.78,376.08 L21.00,375.56 L21.22,375.05 L21.46,374.54 L21.70,374.04 L21.94,373.54 L22.20,373.04 L22.46,372.56 L22.72,372.07 L23.00,371.60 L23.28,371.13 L23.56,370.67 L23.85,370.21 L24.15,369.76 L24.46,369.32 L24.77,368.88 L25.08,368.45 L25.40,368.03 L25.73,367.61 L26.06,367.21 L26.40,366.81 L26.75,366.42 L27.09,366.03 L27.45,365.65 L27.81,365.29 L28.17,364.93 L28.54,364.57 L28.91,364.23 L29.29,363.90 L29.68,363.57 L30.06,363.25 L30.45,362.94 L30.85,362.64 L31.25,362.35 L31.65,362.07 L32.06,361.79 L32.47,361.53 L32.89,361.28 L33.30,361.03 L33.72,360.79 L34.15,360.57 L34.57,360.35 L35.00,360.14 L35.44,359.95 L35.87,359.76 L36.31,359.58 L36.75,359.41 L37.19,359.26 L37.64,359.11 L38.08,358.97 L38.53,358.84 L38.98,358.72 L39.43,358.62 L39.89,358.52 L40.34,358.43 L40.79,358.35 L41.25,358.29 L41.71,358.23 L42.17,358.18 L42.62,358.15 L43.08,358.12 L43.54,358.11 L44.00,358.10 L44.46,358.11 L44.92,358.12 L45.38,358.15 L45.83,358.18 L46.29,358.23 L46.75,358.29 L47.21,358.35 L47.66,358.43 L48.11,358.52 L48.57,358.62 L49.02,358.72 L49.47,358.84 L49.92,358.97 L50.36,359.11 L50.81,359.26 L51.25,359.41 L51.69,359.58 L52.13,359.76 L52.56,359.95 L53.00,360.14 L53.43,360.35 L53.85,360.57 L54.28,360.79 L54.70,361.03 L55.11,361.28 L55.53,361.53 L55.94,361.79 L56.35,362.07 L56.75,362.35 L57.15,362.64 L57.55,362.94 L57.94,363.25 L58.32,363.57 L58.71,363.90 L59.09,364.23 L59.46,364.57 L59.83,364.93 L60.19,365.29 L60.55,365.65 L60.91,366.03 L61.25,366.42 L61.60,366.81 L61.94,367.21 L62.27,367.61 L62.60,368.03 L62.92,368.45 L63.23,368.88 L63.54,369.32 L63.85,369.76 L64.15,370.21 L64.44,370.67 L64.72,371.13 L65.00,371.60 L65.28,372.07 L65.54,372.56 L65.80,373.04 L66.06,373.54 L66.30,374.04 L66.54,374.54 L66.78,375.05 L67.00,375.56 L67.22,376.08 L67.43,376.61 L67.64,377.14 L67.84,377.67 L68.03,378.21 L68.21,378.75 L68.38,379.30 L68.55,379.85 L68.71,380.41 L68.87,380.96 L69.01,381.52 L69.15,382.09 L69.28,382.66 L69.40,383.23 L69.52,383.80 L69.63,384.37 L69.73,384.95 L69.82,385.53 L69.90,386.11 L69.98,386.70 L70.04,387.28 L70.10,387.87 L70.16,388.46 L70.20,389.05 L70.24,389.64 L70.26,390.23 L70.28,390.82 L70.30,391.41 L70.30,392.00 L70.30,392.59 L70.28,393.18 L70.26,393.77 L70.24,394.36 L70.20,394.95 L70.16,395.54 L70.10,396.13 L70.04,396.72 L69.98,397.30 L69.90,397.89 L69.82,398.47 L69.73,399.05 L69.63,399.63 L69.52,400.20 L69.40,400.77 L69.28,401.34 L69.15,401.91 L69.01,402.48 L68.87,403.04 L68.71,403.59 L68.55,404.15 L68.38,404.70 L68.21,405.25 L68.03,405.79 L67.84,406.33 L67.64,406.86 L67.43,407.39 L67.22,407.92 L67.00,408.44 L66.78,408.95 L66.54,409.46 L66.30,409.96 L66.06,410.46 L65.80,410.96 L65.54,411.44 L65.28,411.93 L65.00,412.40 L64.72,412.87 L64.44,413.33 L64.15,413.79 L63.85,414.24 L63.54,414.68 L63.23,415.12 L62.92,415.55 L62.60,415.97" fill="none" stroke="#3c7cb8" stroke-width="1.05"/>
<line x1="25.12" y1="416.25" x2="27.38" y2="413.50" stroke="#3c7cb8" stroke-width="0.85"/>
<line x1="21.23" y1="409.92" x2="22.68" y2="408.86" stroke="#3c7cb8" stroke-width="0.55"/>
<line x1="18.61" y1="402.60" x2="21.65" y2="401.39" stroke="#3c7cb8" stroke-width="0.85"/>
<line x1="17.38" y1="394.69" x2="19.08" y2="394.53" stroke="#3c7cb8" stroke-width="0.55"/>
<line x1="17.63" y1="386.63" x2="20.79" y2="387.24" stroke="#3c7cb8" stroke-width="0.85"/>
<line x1="19.33" y1="378.87" x2="20.90" y2="379.65" stroke="#3c7cb8" stroke-width="0.55"/>
<line x1="22.40" y1="371.84" x2="24.99" y2="374.13" stroke="#3c7cb8" stroke-width="0.85"/>
<line x1="26.66" y1="365.92" x2="27.76" y2="367.46" stroke="#3c7cb8" stroke-width="0.55"/>
<line x1="31.88" y1="361.44" x2="33.33" y2="364.91" stroke="#3c7cb8" stroke-width="0.85"/>
<line x1="37.77" y1="358.65" x2="38.16" y2="360.62" stroke="#3c7cb8" stroke-width="0.55"/>
<line x1="44.00" y1="357.70" x2="44.00" y2="361.60" stroke="#3c7cb8" stroke-width="0.85"/>
<line x1="50.23" y1="358.65" x2="49.84" y2="360.62" stroke="#3c7cb8" stroke-width="0.55"/>
<line x1="56.12" y1="361.44" x2="54.67" y2="364.91" stroke="#3c7cb8" stroke-width="0.85"/>
<line x1="61.34" y1="365.92" x2="60.24" y2="367.46" stroke="#3c7cb8" stroke-width="0.55"/>
<line x1="65.60" y1="371.84" x2="63.01" y2="374.13" stroke="#3c7cb8" stroke-width="0.85"/>
<line x1="68.67" y1="378.87" x2="67.10" y2="379.65" stroke="#3c7cb8" stroke-width="0.55"/>
<line x1="70.37" y1="386.63" x2="67.21" y2="387.24" stroke="#3c7cb8" stroke-width="0.85"/>
<line x1="70.62" y1="394.69" x2="68.92" y2="394.53" stroke="#3c7cb8" stroke-width="0.55"/>
<line x1="69.39" y1="402.60" x2="66.35" y2="401.39" stroke="#3c7cb8" stroke-width="0.85"/>
<line x1="66.77" y1="409.92" x2="65.32" y2="408.86" stroke="#3c7cb8" stroke-width="0.55"/>
<line x1="62.88" y1="416.25" x2="60.62" y2="413.50" stroke="#3c7cb8" stroke-width="0.85"/>
<text x="20.48" y="423.93" font-size="6.0" fill="#4676a8" stroke="#4676a8" stroke-width="0.12" textLength="2.35" lengthAdjust="spacingAndGlyphs">0</text>
<text x="11.60" y="407.73" font-size="6.0" fill="#4676a8" stroke="#4676a8" stroke-width="0.12" textLength="4.70" lengthAdjust="spacingAndGlyphs">10</text>
<text x="10.44" y="388.78" font-size="6.0" fill="#4676a8" stroke="#4676a8" stroke-width="0.12" textLength="4.70" lengthAdjust="spacingAndGlyphs">20</text>
<text x="16.09" y="371.23" font-size="6.0" fill="#4676a8" stroke="#4676a8" stroke-width="0.12" textLength="4.70" lengthAdjust="spacingAndGlyphs">30</text>
<text x="27.30" y="358.89" font-size="6.0" fill="#4676a8" stroke="#4676a8" stroke-width="0.12" textLength="4.70" lengthAdjust="spacingAndGlyphs">40</text>
<text x="41.65" y="354.45" font-size="6.0" fill="#4676a8" stroke="#4676a8" stroke-width="0.12" textLength="4.70" lengthAdjust="spacingAndGlyphs">50</text>
<text x="56.00" y="358.89" font-size="6.0" fill="#4676a8" stroke="#4676a8" stroke-width="0.12" textLength="4.70" lengthAdjust="spacingAndGlyphs">60</text>
<text x="67.21" y="371.23" font-size="6.0" fill="#4676a8" stroke="#4676a8" stroke-width="0.12" textLength="4.70" lengthAdjust="spacingAndGlyphs">70</text>
<text x="72.86" y="388.78" font-size="6.0" fill="#4676a8" stroke="#4676a8" stroke-width="0.12" textLength="4.70" lengthAdjust="spacingAndGlyphs">80</text>
<text x="71.70" y="407.73" font-size="6.0" fill="#4676a8" stroke="#4676a8" stroke-width="0.12" textLength="4.70" lengthAdjust="spacingAndGlyphs">90</text>
<text x="62.82" y="423.93" font-size="6.0" fill="#4676a8" stroke="#4676a8" stroke-width="0.12" textLength="7.05" lengthAdjust="spacingAndGlyphs">100</text>
<circle cx="44.00" cy="391.40" r="1.9" fill="#8a3ad8"/>
<path d="M25.40,415.97 L46.16,387.65 L47.78,389.28 Z" fill="#34d4e4"/>
<rect x="31.30" y="402.80" width="24.50" height="7.90" fill="#000" stroke="none" stroke-width="1" rx="0" />
<text x="32.30" y="409.20" font-size="6.84" fill="#10a29c" stroke="#10a29c" stroke-width="0.15" font-weight="normal" textLength="22.50" lengthAdjust="spacingAndGlyphs" >Air Hum</text>
<rect x="30.00" y="417.70" width="19.40" height="8.40" fill="#000" stroke="#363636" stroke-width="1" rx="0.8" />
<text x="51.55" y="423.90" font-size="6.70" fill="#4786c8" stroke="#4786c8" stroke-width="0.15" font-weight="normal" textLength="5.15" lengthAdjust="spacingAndGlyphs" >%</text>
<path d="M119.40,414.47 L119.08,414.05 L118.77,413.62 L118.46,413.18 L118.15,412.74 L117.85,412.29 L117.56,411.83 L117.28,411.37 L117.00,410.90 L116.72,410.43 L116.46,409.94 L116.20,409.46 L115.94,408.96 L115.70,408.46 L115.46,407.96 L115.22,407.45 L115.00,406.94 L114.78,406.42 L114.57,405.89 L114.36,405.36 L114.16,404.83 L113.97,404.29 L113.79,403.75 L113.62,403.20 L113.45,402.65 L113.29,402.09 L113.13,401.54 L112.99,400.98 L112.85,400.41 L112.72,399.84 L112.60,399.27 L112.48,398.70 L112.37,398.13 L112.27,397.55 L112.18,396.97 L112.10,396.39 L112.02,395.80 L111.96,395.22 L111.90,394.63 L111.84,394.04 L111.80,393.45 L111.76,392.86 L111.74,392.27 L111.72,391.68 L111.70,391.09 L111.70,390.50 L111.70,389.91 L111.72,389.32 L111.74,388.73 L111.76,388.14 L111.80,387.55 L111.84,386.96 L111.90,386.37 L111.96,385.78 L112.02,385.20 L112.10,384.61 L112.18,384.03 L112.27,383.45 L112.37,382.87 L112.48,382.30 L112.60,381.73 L112.72,381.16 L112.85,380.59 L112.99,380.02 L113.13,379.46 L113.29,378.91 L113.45,378.35 L113.62,377.80 L113.79,377.25 L113.97,376.71 L114.16,376.17 L114.36,375.64 L114.57,375.11 L114.78,374.58 L115.00,374.06 L115.22,373.55 L115.46,373.04 L115.70,372.54 L115.94,372.04 L116.20,371.54 L116.46,371.06 L116.72,370.57 L117.00,370.10 L117.28,369.63 L117.56,369.17 L117.85,368.71 L118.15,368.26 L118.46,367.82 L118.77,367.38 L119.08,366.95 L119.40,366.53 L119.73,366.11 L120.06,365.71 L120.40,365.31 L120.75,364.92 L121.09,364.53 L121.45,364.15 L121.81,363.79 L122.17,363.43 L122.54,363.07 L122.91,362.73 L123.29,362.40 L123.68,362.07 L124.06,361.75 L124.45,361.44 L124.85,361.14 L125.25,360.85 L125.65,360.57 L126.06,360.29 L126.47,360.03 L126.89,359.78 L127.30,359.53 L127.72,359.29 L128.15,359.07 L128.57,358.85 L129.00,358.64 L129.44,358.45 L129.87,358.26 L130.31,358.08 L130.75,357.91 L131.19,357.76 L131.64,357.61 L132.08,357.47 L132.53,357.34 L132.98,357.22 L133.43,357.12 L133.89,357.02 L134.34,356.93 L134.79,356.85 L135.25,356.79 L135.71,356.73 L136.17,356.68 L136.62,356.65 L137.08,356.62 L137.54,356.61 L138.00,356.60 L138.46,356.61 L138.92,356.62 L139.38,356.65 L139.83,356.68 L140.29,356.73 L140.75,356.79 L141.21,356.85 L141.66,356.93 L142.11,357.02 L142.57,357.12 L143.02,357.22 L143.47,357.34 L143.92,357.47 L144.36,357.61 L144.81,357.76 L145.25,357.91 L145.69,358.08 L146.13,358.26 L146.56,358.45 L147.00,358.64 L147.43,358.85 L147.85,359.07 L148.28,359.29 L148.70,359.53 L149.11,359.78 L149.53,360.03 L149.94,360.29 L150.35,360.57 L150.75,360.85 L151.15,361.14 L151.55,361.44 L151.94,361.75 L152.32,362.07 L152.71,362.40 L153.09,362.73 L153.46,363.07 L153.83,363.43 L154.19,363.79 L154.55,364.15 L154.91,364.53 L155.25,364.92 L155.60,365.31 L155.94,365.71 L156.27,366.11 L156.60,366.53 L156.92,366.95 L157.23,367.38 L157.54,367.82 L157.85,368.26 L158.15,368.71 L158.44,369.17 L158.72,369.63 L159.00,370.10 L159.28,370.57 L159.54,371.06 L159.80,371.54 L160.06,372.04 L160.30,372.54 L160.54,373.04 L160.78,373.55 L161.00,374.06 L161.22,374.58 L161.43,375.11 L161.64,375.64 L161.84,376.17 L162.03,376.71 L162.21,377.25 L162.38,377.80 L162.55,378.35 L162.71,378.91 L162.87,379.46 L163.01,380.02 L163.15,380.59 L163.28,381.16 L163.40,381.73 L163.52,382.30 L163.63,382.87 L163.73,383.45 L163.82,384.03 L163.90,384.61 L163.98,385.20 L164.04,385.78 L164.10,386.37 L164.16,386.96 L164.20,387.55 L164.24,388.14 L164.26,388.73 L164.28,389.32 L164.30,389.91 L164.30,390.50 L164.30,391.09 L164.28,391.68 L164.26,392.27 L164.24,392.86 L164.20,393.45 L164.16,394.04 L164.10,394.63 L164.04,395.22 L163.98,395.80 L163.90,396.39 L163.82,396.97 L163.73,397.55 L163.63,398.13 L163.52,398.70 L163.40,399.27 L163.28,399.84 L163.15,400.41 L163.01,400.98 L162.87,401.54 L162.71,402.09 L162.55,402.65 L162.38,403.20 L162.21,403.75 L162.03,404.29 L161.84,404.83 L161.64,405.36 L161.43,405.89 L161.22,406.42 L161.00,406.94 L160.78,407.45 L160.54,407.96 L160.30,408.46 L160.06,408.96 L159.80,409.46 L159.54,409.94 L159.28,410.43 L159.00,410.90 L158.72,411.37 L158.44,411.83 L158.15,412.29 L157.85,412.74 L157.54,413.18 L157.23,413.62 L156.92,414.05 L156.60,414.47" fill="none" stroke="#3c7cb8" stroke-width="1.05"/>
<line x1="119.12" y1="414.75" x2="121.38" y2="412.00" stroke="#3c7cb8" stroke-width="0.85"/>
<line x1="115.80" y1="409.56" x2="117.21" y2="408.43" stroke="#3c7cb8" stroke-width="0.55"/>
<line x1="113.33" y1="403.63" x2="116.29" y2="402.13" stroke="#3c7cb8" stroke-width="0.85"/>
<line x1="111.81" y1="397.19" x2="113.48" y2="396.80" stroke="#3c7cb8" stroke-width="0.55"/>
<line x1="111.30" y1="390.50" x2="114.50" y2="390.50" stroke="#3c7cb8" stroke-width="0.85"/>
<line x1="111.81" y1="383.81" x2="113.48" y2="384.20" stroke="#3c7cb8" stroke-width="0.55"/>
<line x1="113.33" y1="377.37" x2="116.29" y2="378.87" stroke="#3c7cb8" stroke-width="0.85"/>
<line x1="115.80" y1="371.44" x2="117.21" y2="372.57" stroke="#3c7cb8" stroke-width="0.55"/>
<line x1="119.12" y1="366.25" x2="121.38" y2="369.00" stroke="#3c7cb8" stroke-width="0.85"/>
<line x1="123.17" y1="361.98" x2="124.11" y2="363.66" stroke="#3c7cb8" stroke-width="0.55"/>
<line x1="127.78" y1="358.81" x2="129.01" y2="362.41" stroke="#3c7cb8" stroke-width="0.85"/>
<line x1="132.79" y1="356.86" x2="133.12" y2="358.85" stroke="#3c7cb8" stroke-width="0.55"/>
<line x1="138.00" y1="356.20" x2="138.00" y2="360.10" stroke="#3c7cb8" stroke-width="0.85"/>
<line x1="143.21" y1="356.86" x2="142.88" y2="358.85" stroke="#3c7cb8" stroke-width="0.55"/>
<line x1="148.22" y1="358.81" x2="146.99" y2="362.41" stroke="#3c7cb8" stroke-width="0.85"/>
<line x1="152.83" y1="361.98" x2="151.89" y2="363.66" stroke="#3c7cb8" stroke-width="0.55"/>
<line x1="156.88" y1="366.25" x2="154.62" y2="369.00" stroke="#3c7cb8" stroke-width="0.85"/>
<line x1="160.20" y1="371.44" x2="158.79" y2="372.57" stroke="#3c7cb8" stroke-width="0.55"/>
<line x1="162.67" y1="377.37" x2="159.71" y2="378.87" stroke="#3c7cb8" stroke-width="0.85"/>
<line x1="164.19" y1="383.81" x2="162.52" y2="384.20" stroke="#3c7cb8" stroke-width="0.55"/>
<line x1="164.70" y1="390.50" x2="161.50" y2="390.50" stroke="#3c7cb8" stroke-width="0.85"/>
<line x1="164.19" y1="397.19" x2="162.52" y2="396.80" stroke="#3c7cb8" stroke-width="0.55"/>
<line x1="162.67" y1="403.63" x2="159.71" y2="402.13" stroke="#3c7cb8" stroke-width="0.85"/>
<line x1="160.20" y1="409.56" x2="158.79" y2="408.43" stroke="#3c7cb8" stroke-width="0.55"/>
<line x1="156.88" y1="414.75" x2="154.62" y2="412.00" stroke="#3c7cb8" stroke-width="0.85"/>
<text x="112.13" y="422.43" font-size="6.0" fill="#4676a8" stroke="#4676a8" stroke-width="0.12" textLength="7.05" lengthAdjust="spacingAndGlyphs">-20</text>
<text x="105.28" y="409.23" font-size="6.0" fill="#4676a8" stroke="#4676a8" stroke-width="0.12" textLength="7.05" lengthAdjust="spacingAndGlyphs">-10</text>
<text x="105.23" y="393.65" font-size="6.0" fill="#4676a8" stroke="#4676a8" stroke-width="0.12" textLength="2.35" lengthAdjust="spacingAndGlyphs">0</text>
<text x="106.46" y="378.07" font-size="6.0" fill="#4676a8" stroke="#4676a8" stroke-width="0.12" textLength="4.70" lengthAdjust="spacingAndGlyphs">10</text>
<text x="113.31" y="364.87" font-size="6.0" fill="#4676a8" stroke="#4676a8" stroke-width="0.12" textLength="4.70" lengthAdjust="spacingAndGlyphs">20</text>
<text x="123.56" y="356.05" font-size="6.0" fill="#4676a8" stroke="#4676a8" stroke-width="0.12" textLength="4.70" lengthAdjust="spacingAndGlyphs">30</text>
<text x="135.65" y="352.95" font-size="6.0" fill="#4676a8" stroke="#4676a8" stroke-width="0.12" textLength="4.70" lengthAdjust="spacingAndGlyphs">40</text>
<text x="147.74" y="356.05" font-size="6.0" fill="#4676a8" stroke="#4676a8" stroke-width="0.12" textLength="4.70" lengthAdjust="spacingAndGlyphs">50</text>
<text x="157.99" y="364.87" font-size="6.0" fill="#4676a8" stroke="#4676a8" stroke-width="0.12" textLength="4.70" lengthAdjust="spacingAndGlyphs">60</text>
<text x="164.84" y="378.07" font-size="6.0" fill="#4676a8" stroke="#4676a8" stroke-width="0.12" textLength="4.70" lengthAdjust="spacingAndGlyphs">70</text>
<text x="167.25" y="393.65" font-size="6.0" fill="#4676a8" stroke="#4676a8" stroke-width="0.12" textLength="4.70" lengthAdjust="spacingAndGlyphs">80</text>
<text x="164.84" y="409.23" font-size="6.0" fill="#4676a8" stroke="#4676a8" stroke-width="0.12" textLength="4.70" lengthAdjust="spacingAndGlyphs">90</text>
<text x="156.82" y="422.43" font-size="6.0" fill="#4676a8" stroke="#4676a8" stroke-width="0.12" textLength="7.05" lengthAdjust="spacingAndGlyphs">100</text>
<circle cx="138.00" cy="389.90" r="1.9" fill="#8a3ad8"/>
<path d="M111.70,390.50 L142.20,389.35 L142.20,391.65 Z" fill="#34d4e4"/>
<rect x="123.10" y="402.70" width="30.20" height="8.10" fill="#000" stroke="none" stroke-width="1" rx="0" />
<text x="124.10" y="409.30" font-size="7.12" fill="#10a29c" stroke="#10a29c" stroke-width="0.15" font-weight="normal" textLength="28.20" lengthAdjust="spacingAndGlyphs" >Soil Temp</text>
<rect x="123.50" y="413.60" width="19.80" height="9.10" fill="#000" stroke="#363636" stroke-width="1" rx="0.8" />
<text x="146.00" y="420.80" font-size="7.68" fill="#4786c8" stroke="#4786c8" stroke-width="0.15" font-weight="normal" textLength="5.50" lengthAdjust="spacingAndGlyphs" >°C</text>
<path d="M214.60,416.37 L214.28,415.95 L213.97,415.52 L213.66,415.08 L213.35,414.64 L213.05,414.19 L212.76,413.73 L212.48,413.27 L212.20,412.80 L211.92,412.33 L211.66,411.84 L211.40,411.36 L211.14,410.86 L210.90,410.36 L210.66,409.86 L210.42,409.35 L210.20,408.84 L209.98,408.32 L209.77,407.79 L209.56,407.26 L209.36,406.73 L209.17,406.19 L208.99,405.65 L208.82,405.10 L208.65,404.55 L208.49,403.99 L208.33,403.44 L208.19,402.88 L208.05,402.31 L207.92,401.74 L207.80,401.17 L207.68,400.60 L207.57,400.03 L207.47,399.45 L207.38,398.87 L207.30,398.29 L207.22,397.70 L207.16,397.12 L207.10,396.53 L207.04,395.94 L207.00,395.35 L206.96,394.76 L206.94,394.17 L206.92,393.58 L206.90,392.99 L206.90,392.40 L206.90,391.81 L206.92,391.22 L206.94,390.63 L206.96,390.04 L207.00,389.45 L207.04,388.86 L207.10,388.27 L207.16,387.68 L207.22,387.10 L207.30,386.51 L207.38,385.93 L207.47,385.35 L207.57,384.77 L207.68,384.20 L207.80,383.63 L207.92,383.06 L208.05,382.49 L208.19,381.92 L208.33,381.36 L208.49,380.81 L208.65,380.25 L208.82,379.70 L208.99,379.15 L209.17,378.61 L209.36,378.07 L209.56,377.54 L209.77,377.01 L209.98,376.48 L210.20,375.96 L210.42,375.45 L210.66,374.94 L210.90,374.44 L211.14,373.94 L211.40,373.44 L211.66,372.96 L211.92,372.47 L212.20,372.00 L212.48,371.53 L212.76,371.07 L213.05,370.61 L213.35,370.16 L213.66,369.72 L213.97,369.28 L214.28,368.85 L214.60,368.43 L214.93,368.01 L215.26,367.61 L215.60,367.21 L215.95,366.82 L216.29,366.43 L216.65,366.05 L217.01,365.69 L217.37,365.33 L217.74,364.97 L218.11,364.63 L218.49,364.30 L218.88,363.97 L219.26,363.65 L219.65,363.34 L220.05,363.04 L220.45,362.75 L220.85,362.47 L221.26,362.19 L221.67,361.93 L222.09,361.68 L222.50,361.43 L222.92,361.19 L223.35,360.97 L223.77,360.75 L224.20,360.54 L224.64,360.35 L225.07,360.16 L225.51,359.98 L225.95,359.81 L226.39,359.66 L226.84,359.51 L227.28,359.37 L227.73,359.24 L228.18,359.12 L228.63,359.02 L229.09,358.92 L229.54,358.83 L229.99,358.75 L230.45,358.69 L230.91,358.63 L231.37,358.58 L231.82,358.55 L232.28,358.52 L232.74,358.51 L233.20,358.50 L233.66,358.51 L234.12,358.52 L234.58,358.55 L235.03,358.58 L235.49,358.63 L235.95,358.69 L236.41,358.75 L236.86,358.83 L237.31,358.92 L237.77,359.02 L238.22,359.12 L238.67,359.24 L239.12,359.37 L239.56,359.51 L240.01,359.66 L240.45,359.81 L240.89,359.98 L241.33,360.16 L241.76,360.35 L242.20,360.54 L242.63,360.75 L243.05,360.97 L243.48,361.19 L243.90,361.43 L244.31,361.68 L244.73,361.93 L245.14,362.19 L245.55,362.47 L245.95,362.75 L246.35,363.04 L246.75,363.34 L247.14,363.65 L247.52,363.97 L247.91,364.30 L248.29,364.63 L248.66,364.97 L249.03,365.33 L249.39,365.69 L249.75,366.05 L250.11,366.43 L250.45,366.82 L250.80,367.21 L251.14,367.61 L251.47,368.01 L251.80,368.43 L252.12,368.85 L252.43,369.28 L252.74,369.72 L253.05,370.16 L253.35,370.61 L253.64,371.07 L253.92,371.53 L254.20,372.00 L254.48,372.47 L254.74,372.96 L255.00,373.44 L255.26,373.94 L255.50,374.44 L255.74,374.94 L255.98,375.45 L256.20,375.96 L256.42,376.48 L256.63,377.01 L256.84,377.54 L257.04,378.07 L257.23,378.61 L257.41,379.15 L257.58,379.70 L257.75,380.25 L257.91,380.81 L258.07,381.36 L258.21,381.92 L258.35,382.49 L258.48,383.06 L258.60,383.63 L258.72,384.20 L258.83,384.77 L258.93,385.35 L259.02,385.93 L259.10,386.51 L259.18,387.10 L259.24,387.68 L259.30,388.27 L259.36,388.86 L259.40,389.45 L259.44,390.04 L259.46,390.63 L259.48,391.22 L259.50,391.81 L259.50,392.40 L259.50,392.99 L259.48,393.58 L259.46,394.17 L259.44,394.76 L259.40,395.35 L259.36,395.94 L259.30,396.53 L259.24,397.12 L259.18,397.70 L259.10,398.29 L259.02,398.87 L258.93,399.45 L258.83,400.03 L258.72,400.60 L258.60,401.17 L258.48,401.74 L258.35,402.31 L258.21,402.88 L258.07,403.44 L257.91,403.99 L257.75,404.55 L257.58,405.10 L257.41,405.65 L257.23,406.19 L257.04,406.73 L256.84,407.26 L256.63,407.79 L256.42,408.32 L256.20,408.84 L255.98,409.35 L255.74,409.86 L255.50,410.36 L255.26,410.86 L255.00,411.36 L254.74,411.84 L254.48,412.33 L254.20,412.80 L253.92,413.27 L253.64,413.73 L253.35,414.19 L253.05,414.64 L252.74,415.08 L252.43,415.52 L252.12,415.95 L251.80,416.37" fill="none" stroke="#3c7cb8" stroke-width="1.05"/>
<line x1="214.32" y1="416.65" x2="216.58" y2="413.90" stroke="#3c7cb8" stroke-width="0.85"/>
<line x1="210.43" y1="410.32" x2="211.88" y2="409.26" stroke="#3c7cb8" stroke-width="0.55"/>
<line x1="207.81" y1="403.00" x2="210.85" y2="401.79" stroke="#3c7cb8" stroke-width="0.85"/>
<line x1="206.58" y1="395.09" x2="208.28" y2="394.93" stroke="#3c7cb8" stroke-width="0.55"/>
<line x1="206.83" y1="387.03" x2="209.99" y2="387.64" stroke="#3c7cb8" stroke-width="0.85"/>
<line x1="208.53" y1="379.27" x2="210.10" y2="380.05" stroke="#3c7cb8" stroke-width="0.55"/>
<line x1="211.60" y1="372.24" x2="214.19" y2="374.53" stroke="#3c7cb8" stroke-width="0.85"/>
<line x1="215.86" y1="366.32" x2="216.96" y2="367.86" stroke="#3c7cb8" stroke-width="0.55"/>
<line x1="221.08" y1="361.84" x2="222.53" y2="365.31" stroke="#3c7cb8" stroke-width="0.85"/>
<line x1="226.97" y1="359.05" x2="227.36" y2="361.02" stroke="#3c7cb8" stroke-width="0.55"/>
<line x1="233.20" y1="358.10" x2="233.20" y2="362.00" stroke="#3c7cb8" stroke-width="0.85"/>
<line x1="239.43" y1="359.05" x2="239.04" y2="361.02" stroke="#3c7cb8" stroke-width="0.55"/>
<line x1="245.32" y1="361.84" x2="243.87" y2="365.31" stroke="#3c7cb8" stroke-width="0.85"/>
<line x1="250.54" y1="366.32" x2="249.44" y2="367.86" stroke="#3c7cb8" stroke-width="0.55"/>
<line x1="254.80" y1="372.24" x2="252.21" y2="374.53" stroke="#3c7cb8" stroke-width="0.85"/>
<line x1="257.87" y1="379.27" x2="256.30" y2="380.05" stroke="#3c7cb8" stroke-width="0.55"/>
<line x1="259.57" y1="387.03" x2="256.41" y2="387.64" stroke="#3c7cb8" stroke-width="0.85"/>
<line x1="259.82" y1="395.09" x2="258.12" y2="394.93" stroke="#3c7cb8" stroke-width="0.55"/>
<line x1="258.59" y1="403.00" x2="255.55" y2="401.79" stroke="#3c7cb8" stroke-width="0.85"/>
<line x1="255.97" y1="410.32" x2="254.52" y2="409.26" stroke="#3c7cb8" stroke-width="0.55"/>
<line x1="252.08" y1="416.65" x2="249.82" y2="413.90" stroke="#3c7cb8" stroke-width="0.85"/>
<text x="209.68" y="424.33" font-size="6.0" fill="#4676a8" stroke="#4676a8" stroke-width="0.12" textLength="2.35" lengthAdjust="spacingAndGlyphs">0</text>
<text x="201.97" y="408.13" font-size="6.0" fill="#4676a8" stroke="#4676a8" stroke-width="0.12" textLength="2.35" lengthAdjust="spacingAndGlyphs">5</text>
<text x="199.64" y="389.18" font-size="6.0" fill="#4676a8" stroke="#4676a8" stroke-width="0.12" textLength="4.70" lengthAdjust="spacingAndGlyphs">10</text>
<text x="205.29" y="371.63" font-size="6.0" fill="#4676a8" stroke="#4676a8" stroke-width="0.12" textLength="4.70" lengthAdjust="spacingAndGlyphs">15</text>
<text x="216.50" y="359.29" font-size="6.0" fill="#4676a8" stroke="#4676a8" stroke-width="0.12" textLength="4.70" lengthAdjust="spacingAndGlyphs">20</text>
<text x="230.85" y="354.85" font-size="6.0" fill="#4676a8" stroke="#4676a8" stroke-width="0.12" textLength="4.70" lengthAdjust="spacingAndGlyphs">25</text>
<text x="245.20" y="359.29" font-size="6.0" fill="#4676a8" stroke="#4676a8" stroke-width="0.12" textLength="4.70" lengthAdjust="spacingAndGlyphs">30</text>
<text x="256.41" y="371.63" font-size="6.0" fill="#4676a8" stroke="#4676a8" stroke-width="0.12" textLength="4.70" lengthAdjust="spacingAndGlyphs">35</text>
<text x="262.06" y="389.18" font-size="6.0" fill="#4676a8" stroke="#4676a8" stroke-width="0.12" textLength="4.70" lengthAdjust="spacingAndGlyphs">40</text>
<text x="260.90" y="408.13" font-size="6.0" fill="#4676a8" stroke="#4676a8" stroke-width="0.12" textLength="4.70" lengthAdjust="spacingAndGlyphs">45</text>
<text x="253.19" y="424.33" font-size="6.0" fill="#4676a8" stroke="#4676a8" stroke-width="0.12" textLength="4.70" lengthAdjust="spacingAndGlyphs">50</text>
<circle cx="233.20" cy="391.80" r="1.9" fill="#8a3ad8"/>
<path d="M214.60,416.37 L235.36,388.05 L236.98,389.68 Z" fill="#34d4e4"/>
<rect x="218.70" y="399.80" width="30.60" height="7.95" fill="#000" stroke="none" stroke-width="1" rx="0" />
<text x="219.70" y="406.25" font-size="6.91" fill="#10a29c" stroke="#10a29c" stroke-width="0.15" font-weight="normal" textLength="28.60" lengthAdjust="spacingAndGlyphs" >Soil Moist</text>
<rect x="220.80" y="417.00" width="19.50" height="8.30" fill="#000" stroke="#363636" stroke-width="1" rx="0.8" />
<text x="242.50" y="422.90" font-size="7.12" fill="#4786c8" stroke="#4786c8" stroke-width="0.15" font-weight="normal" textLength="5.10" lengthAdjust="spacingAndGlyphs" >%</text>
<rect x="329.60" y="246.00" width="218.60" height="153.80" fill="#fff0f5" stroke="none" stroke-width="1" rx="0" />
<line x1="360.83" y1="246.00" x2="360.83" y2="399.80" stroke="#75686d" stroke-width="1.1" />
<line x1="392.06" y1="246.00" x2="392.06" y2="399.80" stroke="#75686d" stroke-width="1.1" />
<line x1="423.29" y1="246.00" x2="423.29" y2="399.80" stroke="#75686d" stroke-width="1.1" />
<line x1="454.51" y1="246.00" x2="454.51" y2="399.80" stroke="#75686d" stroke-width="1.1" />
<line x1="485.74" y1="246.00" x2="485.74" y2="399.80" stroke="#75686d" stroke-width="1.1" />
<line x1="516.97" y1="246.00" x2="516.97" y2="399.80" stroke="#75686d" stroke-width="1.1" />
<line x1="329.60" y1="276.76" x2="548.20" y2="276.76" stroke="#75686d" stroke-width="1.1" />
<line x1="329.60" y1="307.52" x2="548.20" y2="307.52" stroke="#75686d" stroke-width="1.1" />
<line x1="329.60" y1="338.28" x2="548.20" y2="338.28" stroke="#75686d" stroke-width="1.1" />
<line x1="329.60" y1="369.04" x2="548.20" y2="369.04" stroke="#75686d" stroke-width="1.1" />
<polyline points="360.83,369.10 392.06,250.30 423.29,253.30 454.51,280.90 485.74,263.00 516.97,305.60" fill="none" stroke="#4ab0b8" stroke-width="0.9"/>
<text x="357.10" y="382.10" font-size="7.82" fill="#1a8c90" font-weight="bold" textLength="6.80" lengthAdjust="spacingAndGlyphs">18</text>
<text x="388.60" y="258.30" font-size="7.82" fill="#1a8c90" font-weight="bold" textLength="6.80" lengthAdjust="spacingAndGlyphs">97</text>
<text x="419.60" y="248.50" font-size="7.68" fill="#1a8c90" font-weight="bold" textLength="6.80" lengthAdjust="spacingAndGlyphs">96</text>
<text x="451.35" y="291.60" font-size="7.82" fill="#1a8c90" font-weight="bold" textLength="6.80" lengthAdjust="spacingAndGlyphs">77</text>
<text x="482.30" y="257.50" font-size="7.82" fill="#1a8c90" font-weight="bold" textLength="6.80" lengthAdjust="spacingAndGlyphs">89</text>
<text x="513.50" y="316.00" font-size="7.82" fill="#1a8c90" font-weight="bold" textLength="6.80" lengthAdjust="spacingAndGlyphs">61</text>
<text x="430.00" y="422.50" font-size="8.73" fill="#10a29c" stroke="#10a29c" stroke-width="0.00" font-weight="bold" textLength="17.00" lengthAdjust="spacingAndGlyphs" >Value</text>
<text x="0" y="0" font-size="7.6" fill="#10a29c" font-weight="bold" textLength="65.9" lengthAdjust="spacingAndGlyphs" transform="translate(307,356.4) rotate(-90)">Spectrocopy Meter</text>
<rect x="558.20" y="240.80" width="64.90" height="12.00" fill="#fff" stroke="none" stroke-width="1" rx="0" />
<line x1="562.00" y1="246.50" x2="570.00" y2="246.50" stroke="#20a8b0" stroke-width="1.2" />
<text x="572.00" y="249.20" font-size="7.54" fill="#202020" stroke="#202020" stroke-width="0.00" font-weight="bold" textLength="46.00" lengthAdjust="spacingAndGlyphs" >Raman Spectography</text>
</svg></body></html>
